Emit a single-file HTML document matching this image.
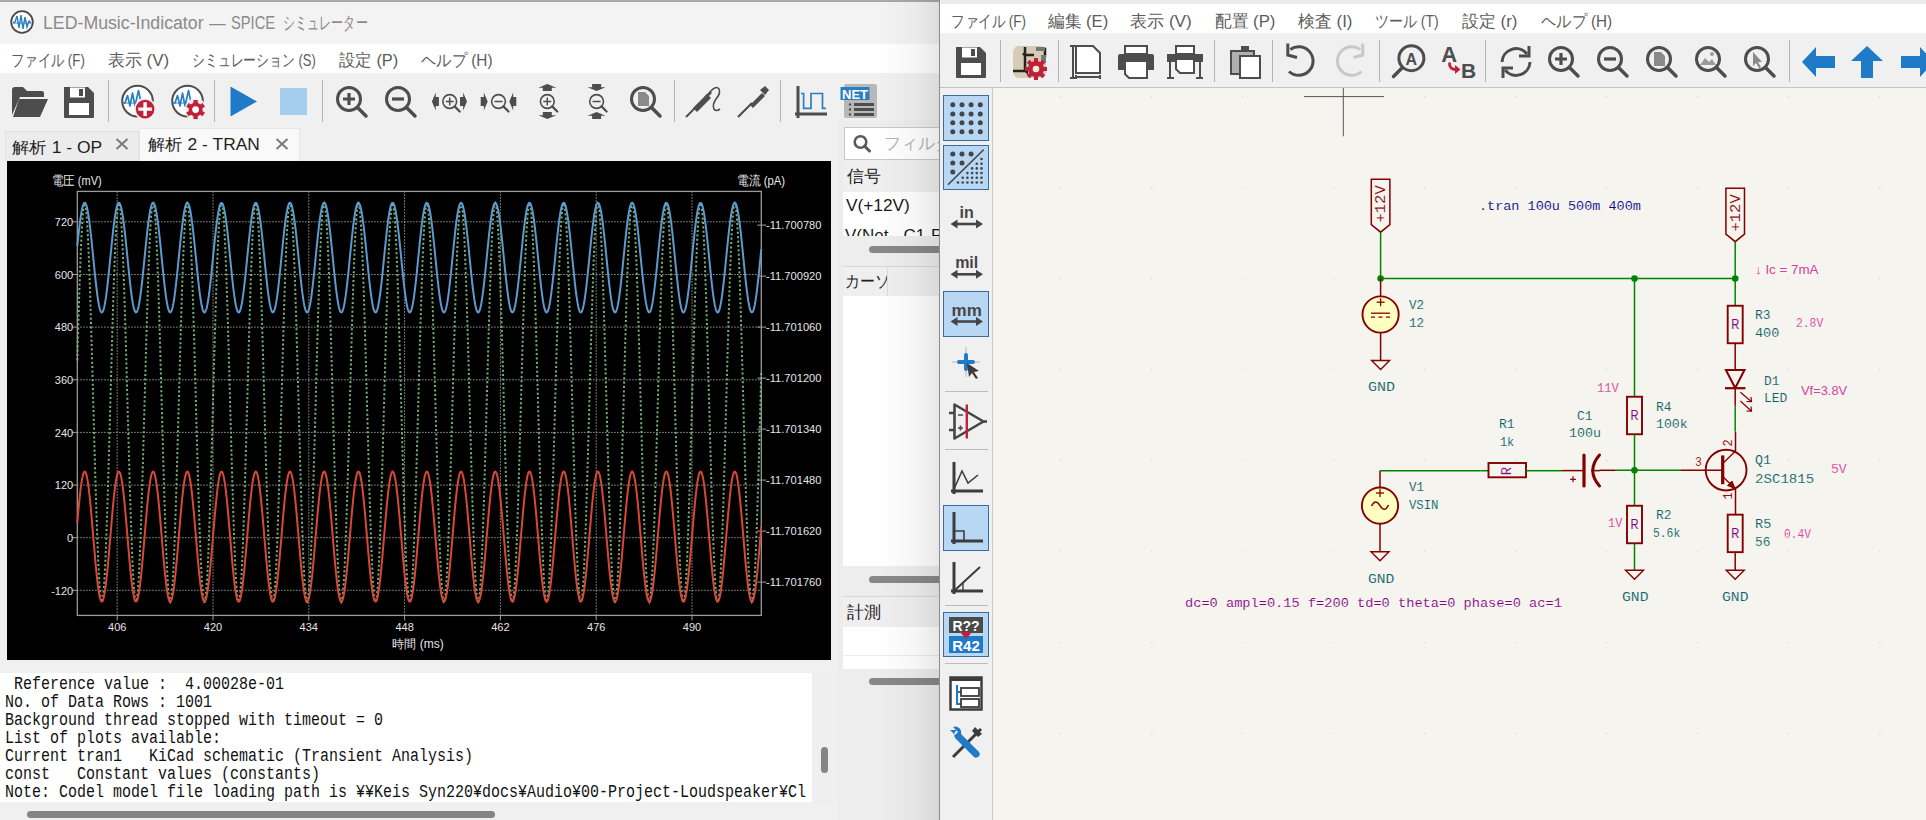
<!DOCTYPE html><html><head><meta charset="utf-8"><title>KiCad</title><style>
*{box-sizing:border-box;margin:0;padding:0}
html,body{width:1926px;height:820px;overflow:hidden;background:#f0f0f0;font-family:"Liberation Sans",sans-serif;position:relative}
.abs{position:absolute}
svg{position:absolute;overflow:visible}
</style></head><body>
<div class="abs" style="left:0px;top:0px;width:940px;height:820px;background:#f0f0f0;"></div>
<div class="abs" style="left:0px;top:0px;width:940px;height:2px;background:#a9a9a9;"></div>
<div class="abs" style="left:0px;top:2px;width:940px;height:42px;background:#f3f3f3;"></div>
<svg style="left:9px;top:9px" width="26" height="26" viewBox="0 0 26 26"><circle cx="13" cy="13" r="10.8" fill="#fff" stroke="#484848" stroke-width="1.8"/><path d="M4 14 L6 13 L8 7 L10 19 L12 6 L14 20 L16 8 L18 18 L20 12 L22 14" fill="none" stroke="#2a7fc0" stroke-width="1.4"/><line x1="4" y1="14" x2="22" y2="14" stroke="#2a7fc0" stroke-width="0.9"/></svg>
<div id="t1" style="position:absolute;top:13.9px;font-size:18px;line-height:18px;color:#8a8a8a;font-family:'Liberation Sans',sans-serif;font-weight:normal;white-space:nowrap;left:42.6px;transform-origin:0 50%;transform:scaleX(0.9847);">LED-Music-Indicator</div>
<div id="t2" style="position:absolute;top:13.9px;font-size:18px;line-height:18px;color:#8a8a8a;font-family:'Liberation Sans',sans-serif;font-weight:normal;white-space:nowrap;left:208.8px;transform-origin:0 50%;transform:scaleX(0.9278);">—</div>
<div id="t3" style="position:absolute;top:13.9px;font-size:18px;line-height:18px;color:#8a8a8a;font-family:'Liberation Sans',sans-serif;font-weight:normal;white-space:nowrap;left:231.3px;transform-origin:0 50%;transform:scaleX(0.8167);">SPICE</div>
<div id="t4" style="position:absolute;top:13.9px;font-size:18px;line-height:18px;color:#8a8a8a;font-family:'Liberation Sans',sans-serif;font-weight:normal;white-space:nowrap;left:282.9px;transform-origin:0 50%;transform:scaleX(0.6722);">シミュレーター</div>
<div class="abs" style="left:0px;top:44px;width:940px;height:29px;background:#ffffff;"></div>
<div id="t5" style="position:absolute;top:52.3px;font-size:17px;line-height:17px;color:#5c5c5c;font-family:'Liberation Sans',sans-serif;font-weight:normal;white-space:nowrap;left:10.6px;transform-origin:0 50%;transform:scaleX(0.7819);">ファイル (F)</div>
<div id="t6" style="position:absolute;top:52.3px;font-size:17px;line-height:17px;color:#5c5c5c;font-family:'Liberation Sans',sans-serif;font-weight:normal;white-space:nowrap;left:107.7px;transform-origin:0 50%;transform:scaleX(0.9967);">表示 (V)</div>
<div id="t7" style="position:absolute;top:52.3px;font-size:17px;line-height:17px;color:#5c5c5c;font-family:'Liberation Sans',sans-serif;font-weight:normal;white-space:nowrap;left:191.9px;transform-origin:0 50%;transform:scaleX(0.7571);">シミュレーション (S)</div>
<div id="t8" style="position:absolute;top:52.3px;font-size:17px;line-height:17px;color:#5c5c5c;font-family:'Liberation Sans',sans-serif;font-weight:normal;white-space:nowrap;left:339.4px;transform-origin:0 50%;transform:scaleX(0.9656);">設定 (P)</div>
<div id="t9" style="position:absolute;top:52.3px;font-size:17px;line-height:17px;color:#5c5c5c;font-family:'Liberation Sans',sans-serif;font-weight:normal;white-space:nowrap;left:421.2px;transform-origin:0 50%;transform:scaleX(0.9013);">ヘルプ (H)</div>
<div class="abs" style="left:0px;top:73px;width:940px;height:55px;background:#f0f0f0;"></div>
<div class="abs" style="left:5px;top:131px;width:134px;height:30px;background:#ececec;border:1px solid #e2e2e2;border-bottom:none"></div>
<div class="abs" style="left:139px;top:128px;width:161px;height:33px;background:#f9f9f9;border:1px solid #e6e6e6;border-bottom:none"></div>
<div id="t10" style="position:absolute;top:139.9px;font-size:16px;line-height:16px;color:#1e1e1e;font-family:'Liberation Sans',sans-serif;font-weight:normal;white-space:nowrap;left:12.0px;transform-origin:0 50%;transform:scaleX(1.0916);">解析 1 - OP</div>
<div id="t11" style="position:absolute;top:136.8px;font-size:16px;line-height:16px;color:#1e1e1e;font-family:'Liberation Sans',sans-serif;font-weight:normal;white-space:nowrap;left:147.5px;transform-origin:0 50%;transform:scaleX(1.0845);">解析 2 - TRAN</div>
<svg style="left:115px;top:138px" width="14" height="12"><path d="M1.5 1 L12.5 11 M12.5 1 L1.5 11" stroke="#7a7a7a" stroke-width="2"/></svg>
<svg style="left:275px;top:138px" width="14" height="12"><path d="M1.5 1 L12.5 11 M12.5 1 L1.5 11" stroke="#7a7a7a" stroke-width="2"/></svg>
<div class="abs" style="left:7px;top:161px;width:824px;height:499px;background:#000000;"></div>
<svg style="left:0;top:0" width="940" height="820" viewBox="0 0 940 820">
<line x1="117.2" y1="191.4" x2="117.2" y2="615.4" stroke="#bdbdbd" stroke-width="1" stroke-dasharray="1.2 1.8"/>
<line x1="117.2" y1="615.4" x2="117.2" y2="620.4" stroke="#a0a0a0" stroke-width="1"/>
<line x1="213.0" y1="191.4" x2="213.0" y2="615.4" stroke="#bdbdbd" stroke-width="1" stroke-dasharray="1.2 1.8"/>
<line x1="213.0" y1="615.4" x2="213.0" y2="620.4" stroke="#a0a0a0" stroke-width="1"/>
<line x1="308.8" y1="191.4" x2="308.8" y2="615.4" stroke="#bdbdbd" stroke-width="1" stroke-dasharray="1.2 1.8"/>
<line x1="308.8" y1="615.4" x2="308.8" y2="620.4" stroke="#a0a0a0" stroke-width="1"/>
<line x1="404.6" y1="191.4" x2="404.6" y2="615.4" stroke="#bdbdbd" stroke-width="1" stroke-dasharray="1.2 1.8"/>
<line x1="404.6" y1="615.4" x2="404.6" y2="620.4" stroke="#a0a0a0" stroke-width="1"/>
<line x1="500.4" y1="191.4" x2="500.4" y2="615.4" stroke="#bdbdbd" stroke-width="1" stroke-dasharray="1.2 1.8"/>
<line x1="500.4" y1="615.4" x2="500.4" y2="620.4" stroke="#a0a0a0" stroke-width="1"/>
<line x1="596.2" y1="191.4" x2="596.2" y2="615.4" stroke="#bdbdbd" stroke-width="1" stroke-dasharray="1.2 1.8"/>
<line x1="596.2" y1="615.4" x2="596.2" y2="620.4" stroke="#a0a0a0" stroke-width="1"/>
<line x1="692.0" y1="191.4" x2="692.0" y2="615.4" stroke="#bdbdbd" stroke-width="1" stroke-dasharray="1.2 1.8"/>
<line x1="692.0" y1="615.4" x2="692.0" y2="620.4" stroke="#a0a0a0" stroke-width="1"/>
<line x1="77.3" y1="221.8" x2="761.3" y2="221.8" stroke="#bdbdbd" stroke-width="1" stroke-dasharray="1.2 1.8"/>
<line x1="72.3" y1="221.8" x2="77.3" y2="221.8" stroke="#a0a0a0" stroke-width="1"/>
<line x1="77.3" y1="274.5" x2="761.3" y2="274.5" stroke="#bdbdbd" stroke-width="1" stroke-dasharray="1.2 1.8"/>
<line x1="72.3" y1="274.5" x2="77.3" y2="274.5" stroke="#a0a0a0" stroke-width="1"/>
<line x1="77.3" y1="327.1" x2="761.3" y2="327.1" stroke="#bdbdbd" stroke-width="1" stroke-dasharray="1.2 1.8"/>
<line x1="72.3" y1="327.1" x2="77.3" y2="327.1" stroke="#a0a0a0" stroke-width="1"/>
<line x1="77.3" y1="379.8" x2="761.3" y2="379.8" stroke="#bdbdbd" stroke-width="1" stroke-dasharray="1.2 1.8"/>
<line x1="72.3" y1="379.8" x2="77.3" y2="379.8" stroke="#a0a0a0" stroke-width="1"/>
<line x1="77.3" y1="432.4" x2="761.3" y2="432.4" stroke="#bdbdbd" stroke-width="1" stroke-dasharray="1.2 1.8"/>
<line x1="72.3" y1="432.4" x2="77.3" y2="432.4" stroke="#a0a0a0" stroke-width="1"/>
<line x1="77.3" y1="485.1" x2="761.3" y2="485.1" stroke="#bdbdbd" stroke-width="1" stroke-dasharray="1.2 1.8"/>
<line x1="72.3" y1="485.1" x2="77.3" y2="485.1" stroke="#a0a0a0" stroke-width="1"/>
<line x1="77.3" y1="537.7" x2="761.3" y2="537.7" stroke="#bdbdbd" stroke-width="1" stroke-dasharray="1.2 1.8"/>
<line x1="72.3" y1="537.7" x2="77.3" y2="537.7" stroke="#a0a0a0" stroke-width="1"/>
<line x1="77.3" y1="590.3" x2="761.3" y2="590.3" stroke="#bdbdbd" stroke-width="1" stroke-dasharray="1.2 1.8"/>
<line x1="72.3" y1="590.3" x2="77.3" y2="590.3" stroke="#a0a0a0" stroke-width="1"/>
<line x1="757.3" y1="225.1" x2="766.3" y2="225.1" stroke="#a0a0a0" stroke-width="1"/>
<line x1="757.3" y1="276.1" x2="766.3" y2="276.1" stroke="#a0a0a0" stroke-width="1"/>
<line x1="757.3" y1="327.1" x2="766.3" y2="327.1" stroke="#a0a0a0" stroke-width="1"/>
<line x1="757.3" y1="378.1" x2="766.3" y2="378.1" stroke="#a0a0a0" stroke-width="1"/>
<line x1="757.3" y1="429.1" x2="766.3" y2="429.1" stroke="#a0a0a0" stroke-width="1"/>
<line x1="757.3" y1="480.1" x2="766.3" y2="480.1" stroke="#a0a0a0" stroke-width="1"/>
<line x1="757.3" y1="531.1" x2="766.3" y2="531.1" stroke="#a0a0a0" stroke-width="1"/>
<line x1="757.3" y1="582.1" x2="766.3" y2="582.1" stroke="#a0a0a0" stroke-width="1"/>
<rect x="77.3" y="191.4" width="684.0" height="424.0" fill="none" stroke="#9a9a9a" stroke-width="1.3"/>
<polyline points="77.3,360.4 77.8,342.7 78.3,325.5 78.8,308.9 79.3,293.2 79.8,278.3 80.3,264.5 80.8,251.9 81.3,240.5 81.8,230.5 82.3,222.0 82.8,214.9 83.3,209.5 83.8,205.7 84.3,203.5 84.8,203.0 85.3,204.2 85.8,207.1 86.3,211.6 86.8,217.7 87.3,225.4 87.8,234.6 88.3,245.2 88.8,257.1 89.3,270.3 89.8,284.5 90.3,299.8 90.8,315.9 91.3,332.7 91.8,350.2 92.3,368.0 92.8,386.2 93.3,404.5 93.8,422.8 94.3,440.9 94.8,458.7 95.3,476.1 95.8,492.8 96.3,508.7 96.8,523.8 97.3,537.8 97.8,550.7 98.3,562.3 98.8,572.6 99.3,581.5 99.8,588.9 100.3,594.7 100.8,598.8 101.3,601.4 101.8,602.2 102.3,601.4 102.8,598.9 103.3,594.7 103.8,588.9 104.3,581.6 104.8,572.7 105.3,562.4 105.8,550.8 106.3,537.9 106.8,523.8 107.3,508.8 107.8,492.9 108.3,476.1 108.8,458.8 109.3,441.0 109.8,422.9 110.3,404.6 110.8,386.3 111.3,368.1 111.8,350.3 112.3,332.8 112.8,316.0 113.3,299.8 113.8,284.6 114.3,270.3 114.8,257.2 115.3,245.2 115.8,234.7 116.3,225.5 116.8,217.8 117.3,211.6 117.8,207.1 118.3,204.2 118.8,203.0 119.3,203.5 119.8,205.7 120.3,209.5 120.8,214.9 121.3,221.9 121.8,230.5 122.3,240.5 122.8,251.8 123.3,264.5 123.8,278.2 124.3,293.1 124.8,308.9 125.3,325.4 125.8,342.6 126.3,360.3 126.8,378.4 127.3,396.6 127.8,415.0 128.3,433.2 128.8,451.1 129.3,468.7 129.8,485.7 130.3,502.0 130.8,517.4 131.3,531.9 131.8,545.3 132.3,557.5 132.8,568.4 133.3,577.9 133.8,585.9 134.3,592.4 134.8,597.2 135.3,600.5 135.8,602.0 136.3,601.9 136.8,600.1 137.3,596.7 137.8,591.6 138.3,584.9 138.8,576.7 139.3,567.0 139.8,555.9 140.3,543.6 140.8,530.0 141.3,515.4 141.8,499.8 142.3,483.4 142.8,466.3 143.3,448.7 143.8,430.7 144.3,412.5 144.8,394.2 145.3,375.9 145.8,357.9 146.3,340.2 146.8,323.1 147.3,306.7 147.8,291.0 148.3,276.3 148.8,262.7 149.3,250.2 149.8,239.0 150.3,229.2 150.8,220.9 151.3,214.1 151.8,208.9 152.3,205.3 152.8,203.4 153.3,203.1 153.8,204.5 154.3,207.6 154.8,212.4 155.3,218.7 155.8,226.6 156.3,236.0 156.8,246.8 157.3,258.9 157.8,272.2 158.3,286.6 158.8,302.0 159.3,318.2 159.8,335.1 160.3,352.6 160.8,370.6 161.3,388.8 161.8,407.1 162.3,425.4 162.8,443.5 163.3,461.2 163.8,478.4 164.3,495.1 164.8,510.9 165.3,525.8 165.8,539.7 166.3,552.4 166.8,563.9 167.3,574.0 167.8,582.6 168.3,589.8 168.8,595.3 169.3,599.3 169.8,601.6 170.3,602.2 170.8,601.1 171.3,598.4 171.8,594.0 172.3,588.0 172.8,580.4 173.3,571.3 173.8,560.8 174.3,549.0 174.8,536.0 175.3,521.8 175.8,506.6 176.3,490.6 176.8,473.8 177.3,456.4 177.8,438.5 178.3,420.4 178.8,402.1 179.3,383.8 179.8,365.6 180.3,347.8 180.8,330.4 181.3,313.7 181.8,297.6 182.3,282.5 182.8,268.4 183.3,255.4 183.8,243.7 184.3,233.3 184.8,224.3 185.3,216.8 185.8,210.9 186.3,206.6 186.8,204.0 187.3,203.0 187.8,203.7 188.3,206.1 188.8,210.1 189.3,215.8 189.8,223.0 190.3,231.8 190.8,242.0 191.3,253.5 191.8,266.3 192.3,280.3 192.8,295.2 193.3,311.1 193.8,327.8 194.3,345.1 194.8,362.8 195.3,380.9 195.8,399.2 196.3,417.5 196.8,435.7 197.3,453.6 197.8,471.1 198.3,488.0 198.8,504.2 199.3,519.5 199.8,533.8 200.3,547.1 200.8,559.1 201.3,569.8 201.8,579.1 202.3,586.9 202.8,593.1 203.3,597.8 203.8,600.8 204.3,602.1 204.8,601.8 205.3,599.8 205.8,596.1 206.3,590.7 206.8,583.8 207.3,575.4 207.8,565.5 208.3,554.3 208.8,541.7 209.3,528.0 209.8,513.3 210.3,497.6 210.8,481.1 211.3,463.9 211.8,446.2 212.3,428.2 212.8,409.9 213.3,391.6 213.8,373.4 214.3,355.4 214.8,337.8 215.3,320.8 215.8,304.4 216.3,288.9 216.8,274.3 217.3,260.9 217.8,248.6 218.3,237.6 218.8,228.0 219.3,219.9 219.8,213.3 220.3,208.3 220.8,204.9 221.3,203.2 221.8,203.2 222.3,204.9 222.8,208.2 223.3,213.2 223.8,219.7 224.3,227.8 224.8,237.4 225.3,248.4 225.8,260.7 226.3,274.1 226.8,288.7 227.3,304.2 227.8,320.5 228.3,337.6 228.8,355.1 229.3,373.1 229.8,391.3 230.3,409.7 230.8,427.9 231.3,446.0 231.8,463.6 232.3,480.8 232.8,497.3 233.3,513.0 233.8,527.8 234.3,541.5 234.8,554.1 235.3,565.4 235.8,575.3 236.3,583.7 236.8,590.7 237.3,596.0 237.8,599.7 238.3,601.8 238.8,602.1 239.3,600.8 239.8,597.9 240.3,593.2 240.8,587.0 241.3,579.2 241.8,570.0 242.3,559.3 242.8,547.3 243.3,534.1 243.8,519.7 244.3,504.4 244.8,488.2 245.3,471.4 245.8,453.9 246.3,436.0 246.8,417.8 247.3,399.5 247.8,381.2 248.3,363.1 248.8,345.3 249.3,328.0 249.8,311.4 250.3,295.5 250.8,280.5 251.3,266.5 251.8,253.7 252.3,242.1 252.8,231.9 253.3,223.2 253.8,215.9 254.3,210.2 254.8,206.2 255.3,203.7 255.8,203.0 256.3,203.9 256.8,206.6 257.3,210.8 257.8,216.7 258.3,224.2 258.8,233.1 259.3,243.5 259.8,255.2 260.3,268.2 260.8,282.3 261.3,297.4 261.8,313.4 262.3,330.2 262.8,347.5 263.3,365.3 263.8,383.5 264.3,401.8 264.8,420.1 265.3,438.2 265.8,456.1 266.3,473.5 266.8,490.3 267.3,506.4 267.8,521.6 268.3,535.8 268.8,548.8 269.3,560.7 269.8,571.2 270.3,580.3 270.8,587.9 271.3,593.9 271.8,598.3 272.3,601.1 272.8,602.2 273.3,601.6 273.8,599.3 274.3,595.4 274.8,589.9 275.3,582.8 275.8,574.1 276.3,564.0 276.8,552.6 277.3,539.9 277.8,526.0 278.3,511.1 278.8,495.3 279.3,478.7 279.8,461.5 280.3,443.7 280.8,425.6 281.3,407.4 281.8,389.0 282.3,370.8 282.8,352.9 283.3,335.4 283.8,318.4 284.3,302.2 284.8,286.8 285.3,272.4 285.8,259.1 286.3,247.0 286.8,236.2 287.3,226.8 287.8,218.8 288.3,212.5 288.8,207.7 289.3,204.6 289.8,203.1 290.3,203.3 290.8,205.2 291.3,208.8 291.8,214.0 292.3,220.8 292.8,229.1 293.3,238.9 293.8,250.0 294.3,262.5 294.8,276.1 295.3,290.8 295.8,306.4 296.3,322.9 296.8,340.0 297.3,357.6 297.8,375.7 298.3,393.9 298.8,412.2 299.3,430.5 299.8,448.5 300.3,466.1 300.8,483.2 301.3,499.6 301.8,515.2 302.3,529.8 302.8,543.4 303.3,555.7 303.8,566.8 304.3,576.5 304.8,584.8 305.3,591.5 305.8,596.6 306.3,600.1 306.8,601.9 307.3,602.1 307.8,600.5 308.3,597.3 308.8,592.5 309.3,586.0 309.8,578.0 310.3,568.5 310.8,557.7 311.3,545.5 311.8,532.1 312.3,517.6 312.8,502.2 313.3,485.9 313.8,468.9 314.3,451.4 314.8,433.4 315.3,415.2 315.8,396.9 316.3,378.6 316.8,360.6 317.3,342.9 317.8,325.7 318.3,309.1 318.8,293.3 319.3,278.5 319.8,264.7 320.3,252.0 320.8,240.6 321.3,230.6 321.8,222.1 322.3,215.0 322.8,209.5 323.3,205.7 323.8,203.5 324.3,203.0 324.8,204.2 325.3,207.1 325.8,211.6 326.3,217.7 326.8,225.3 327.3,234.5 327.8,245.1 328.3,257.0 328.8,270.1 329.3,284.4 329.8,299.6 330.3,315.7 330.8,332.6 331.3,350.0 331.8,367.9 332.3,386.0 332.8,404.3 333.3,422.6 333.8,440.8 334.3,458.6 334.8,475.9 335.3,492.6 335.8,508.6 336.3,523.6 336.8,537.7 337.3,550.6 337.8,562.2 338.3,572.5 338.8,581.4 339.3,588.8 339.8,594.6 340.3,598.8 340.8,601.3 341.3,602.2 341.8,601.4 342.3,598.9 342.8,594.7 343.3,589.0 343.8,581.6 344.3,572.8 344.8,562.5 345.3,550.9 345.8,538.0 346.3,524.0 346.8,509.0 347.3,493.0 347.8,476.3 348.3,459.0 348.8,441.2 349.3,423.1 349.8,404.8 350.3,386.5 350.8,368.3 351.3,350.4 351.8,333.0 352.3,316.1 352.8,300.0 353.3,284.7 353.8,270.5 354.3,257.3 354.8,245.4 355.3,234.8 355.8,225.6 356.3,217.8 356.8,211.7 357.3,207.2 357.8,204.3 358.3,203.0 358.8,203.5 359.3,205.6 359.8,209.4 360.3,214.9 360.8,221.9 361.3,230.4 361.8,240.4 362.3,251.7 362.8,264.3 363.3,278.1 363.8,292.9 364.3,308.7 364.8,325.2 365.3,342.4 365.8,360.1 366.3,378.2 366.8,396.5 367.3,414.8 367.8,433.0 368.3,451.0 368.8,468.5 369.3,485.5 369.8,501.8 370.3,517.3 370.8,531.8 371.3,545.2 371.8,557.4 372.3,568.3 372.8,577.8 373.3,585.8 373.8,592.3 374.3,597.2 374.8,600.5 375.3,602.0 375.8,601.9 376.3,600.2 376.8,596.7 377.3,591.6 377.8,585.0 378.3,576.8 378.8,567.1 379.3,556.0 379.8,543.7 380.3,530.2 380.8,515.5 381.3,500.0 381.8,483.6 382.3,466.5 382.8,448.9 383.3,430.9 383.8,412.7 384.3,394.4 384.8,376.1 385.3,358.1 385.8,340.4 386.3,323.3 386.8,306.8 387.3,291.2 387.8,276.5 388.3,262.8 388.8,250.3 389.3,239.1 389.8,229.3 390.3,221.0 390.8,214.2 391.3,208.9 391.8,205.3 392.3,203.4 392.8,203.1 393.3,204.5 393.8,207.6 394.3,212.3 394.8,218.7 395.3,226.5 395.8,235.9 396.3,246.7 396.8,258.8 397.3,272.0 397.8,286.4 398.3,301.8 398.8,318.0 399.3,335.0 399.8,352.5 400.3,370.4 400.8,388.6 401.3,406.9 401.8,425.2 402.3,443.3 402.8,461.0 403.3,478.3 403.8,494.9 404.3,510.7 404.8,525.7 405.3,539.5 405.8,552.3 406.3,563.8 406.8,573.9 407.3,582.6 407.8,589.7 408.3,595.3 408.8,599.3 409.3,601.6 409.8,602.2 410.3,601.1 410.8,598.4 411.3,594.0 411.8,588.0 412.3,580.5 412.8,571.4 413.3,561.0 413.8,549.2 414.3,536.1 414.8,521.9 415.3,506.8 415.8,490.7 416.3,473.9 416.8,456.5 417.3,438.7 417.8,420.5 418.3,402.2 418.8,383.9 419.3,365.8 419.8,348.0 420.3,330.6 420.8,313.8 421.3,297.8 421.8,282.7 422.3,268.5 422.8,255.6 423.3,243.8 423.8,233.4 424.3,224.4 424.8,216.9 425.3,211.0 425.8,206.7 426.3,204.0 426.8,203.0 427.3,203.7 427.8,206.1 428.3,210.1 428.8,215.7 429.3,223.0 429.8,231.7 430.3,241.9 430.8,253.4 431.3,266.2 431.8,280.1 432.3,295.1 432.8,311.0 433.3,327.6 433.8,344.9 434.3,362.6 434.8,380.7 435.3,399.0 435.8,417.3 436.3,435.5 436.8,453.4 437.3,470.9 437.8,487.8 438.3,504.0 438.8,519.4 439.3,533.7 439.8,547.0 440.3,559.0 440.8,569.7 441.3,579.0 441.8,586.8 442.3,593.1 442.8,597.8 443.3,600.8 443.8,602.1 444.3,601.8 444.8,599.8 445.3,596.1 445.8,590.8 446.3,583.9 446.8,575.5 447.3,565.6 447.8,554.4 448.3,541.9 448.8,528.2 449.3,513.4 449.8,497.7 450.3,481.2 450.8,464.1 451.3,446.4 451.8,428.4 452.3,410.1 452.8,391.8 453.3,373.6 453.8,355.6 454.3,338.0 454.8,320.9 455.3,304.6 455.8,289.1 456.3,274.5 456.8,261.0 457.3,248.7 457.8,237.7 458.3,228.1 458.8,219.9 459.3,213.3 459.8,208.3 460.3,204.9 460.8,203.2 461.3,203.2 461.8,204.8 462.3,208.2 462.8,213.1 463.3,219.7 463.8,227.8 464.3,237.3 464.8,248.3 465.3,260.5 465.8,274.0 466.3,288.5 466.8,304.0 467.3,320.4 467.8,337.4 468.3,355.0 468.8,372.9 469.3,391.2 469.8,409.5 470.3,427.7 470.8,445.8 471.3,463.5 471.8,480.6 472.3,497.2 472.8,512.9 473.3,527.7 473.8,541.4 474.3,554.0 474.8,565.3 475.3,575.2 475.8,583.7 476.3,590.6 476.8,596.0 477.3,599.7 477.8,601.7 478.3,602.1 478.8,600.8 479.3,597.9 479.8,593.3 480.3,587.1 480.8,579.3 481.3,570.1 481.8,559.4 482.3,547.4 482.8,534.2 483.3,519.9 483.8,504.6 484.3,488.4 484.8,471.5 485.3,454.1 485.8,436.2 486.3,418.0 486.8,399.7 487.3,381.4 487.8,363.3 488.3,345.5 488.8,328.2 489.3,311.5 489.8,295.6 490.3,280.6 490.8,266.7 491.3,253.8 491.8,242.3 492.3,232.0 492.8,223.2 493.3,216.0 493.8,210.3 494.3,206.2 494.8,203.8 495.3,203.0 495.8,203.9 496.3,206.5 496.8,210.8 497.3,216.7 497.8,224.1 498.3,233.0 498.8,243.4 499.3,255.1 499.8,268.1 500.3,282.2 500.8,297.3 501.3,313.2 501.8,330.0 502.3,347.3 502.8,365.2 503.3,383.3 503.8,401.6 504.3,419.9 504.8,438.1 505.3,455.9 505.8,473.3 506.3,490.1 506.8,506.2 507.3,521.4 507.8,535.6 508.3,548.7 508.8,560.6 509.3,571.1 509.8,580.2 510.3,587.8 510.8,593.8 511.3,598.3 511.8,601.1 512.3,602.2 512.8,601.6 513.3,599.4 513.8,595.5 514.3,589.9 514.8,582.8 515.3,574.2 515.8,564.1 516.3,552.7 516.8,540.0 517.3,526.2 517.8,511.3 518.3,495.5 518.8,478.9 519.3,461.6 519.8,443.9 520.3,425.8 520.8,407.5 521.3,389.2 521.8,371.0 522.3,353.1 522.8,335.6 523.3,318.6 523.8,302.4 524.3,287.0 524.8,272.5 525.3,259.2 525.8,247.1 526.3,236.3 526.8,226.8 527.3,218.9 527.8,212.5 528.3,207.7 528.8,204.6 529.3,203.1 529.8,203.3 530.3,205.2 530.8,208.8 531.3,213.9 531.8,220.7 532.3,229.0 532.8,238.8 533.3,249.9 533.8,262.4 534.3,276.0 534.8,290.6 535.3,306.3 535.8,322.7 536.3,339.8 536.8,357.5 537.3,375.5 537.8,393.7 538.3,412.0 538.8,430.3 539.3,448.3 539.8,465.9 540.3,483.0 540.8,499.4 541.3,515.0 541.8,529.7 542.3,543.2 542.8,555.6 543.3,566.7 543.8,576.5 544.3,584.7 544.8,591.4 545.3,596.6 545.8,600.1 546.3,601.9 546.8,602.1 547.3,600.5 547.8,597.3 548.3,592.5 548.8,586.1 549.3,578.1 549.8,568.6 550.3,557.8 550.8,545.6 551.3,532.3 551.8,517.8 552.3,502.4 552.8,486.1 553.3,469.1 553.8,451.6 554.3,433.6 554.8,415.4 555.3,397.1 555.8,378.8 556.3,360.8 556.8,343.0 557.3,325.8 557.8,309.3 558.3,293.5 558.8,278.6 559.3,264.8 559.8,252.1 560.3,240.7 560.8,230.7 561.3,222.1 561.8,215.1 562.3,209.6 562.8,205.7 563.3,203.5 563.8,203.0 564.3,204.2 564.8,207.0 565.3,211.5 565.8,217.6 566.3,225.3 566.8,234.4 567.3,245.0 567.8,256.9 568.3,270.0 568.8,284.2 569.3,299.4 569.8,315.5 570.3,332.4 570.8,349.8 571.3,367.7 571.8,385.9 572.3,404.2 572.8,422.5 573.3,440.6 573.8,458.4 574.3,475.7 574.8,492.4 575.3,508.4 575.8,523.5 576.3,537.5 576.8,550.5 577.3,562.1 577.8,572.5 578.3,581.3 578.8,588.7 579.3,594.6 579.8,598.8 580.3,601.3 580.8,602.2 581.3,601.4 581.8,598.9 582.3,594.8 582.8,589.0 583.3,581.7 583.8,572.9 584.3,562.6 584.8,551.0 585.3,538.1 585.8,524.1 586.3,509.1 586.8,493.2 587.3,476.5 587.8,459.2 588.3,441.4 588.8,423.3 589.3,405.0 589.8,386.7 590.3,368.5 590.8,350.6 591.3,333.2 591.8,316.3 592.3,300.2 592.8,284.9 593.3,270.6 593.8,257.4 594.3,245.5 594.8,234.9 595.3,225.6 595.8,217.9 596.3,211.8 596.8,207.2 597.3,204.3 597.8,203.0 598.3,203.5 598.8,205.6 599.3,209.4 599.8,214.8 600.3,221.8 600.8,230.3 601.3,240.3 601.8,251.6 602.3,264.2 602.8,278.0 603.3,292.8 603.8,308.5 604.3,325.1 604.8,342.3 605.3,360.0 605.8,378.0 606.3,396.3 606.8,414.6 607.3,432.8 607.8,450.8 608.3,468.3 608.8,485.3 609.3,501.6 609.8,517.1 610.3,531.6 610.8,545.0 611.3,557.3 611.8,568.2 612.3,577.7 612.8,585.8 613.3,592.3 613.8,597.2 614.3,600.4 614.8,602.0 615.3,601.9 615.8,600.2 616.3,596.8 616.8,591.7 617.3,585.1 617.8,576.9 618.3,567.2 618.8,556.2 619.3,543.8 619.8,530.3 620.3,515.7 620.8,500.1 621.3,483.8 621.8,466.7 622.3,449.1 622.8,431.1 623.3,412.9 623.8,394.5 624.3,376.3 624.8,358.3 625.3,340.6 625.8,323.5 626.3,307.0 626.8,291.3 627.3,276.6 627.8,262.9 628.3,250.5 628.8,239.3 629.3,229.4 629.8,221.1 630.3,214.2 630.8,209.0 631.3,205.3 631.8,203.4 632.3,203.1 632.8,204.5 633.3,207.6 633.8,212.3 634.3,218.6 634.8,226.5 635.3,235.8 635.8,246.6 636.3,258.6 636.8,271.9 637.3,286.3 637.8,301.7 638.3,317.9 638.8,334.8 639.3,352.3 639.8,370.2 640.3,388.4 640.8,406.7 641.3,425.0 641.8,443.1 642.3,460.8 642.8,478.1 643.3,494.7 643.8,510.6 644.3,525.5 644.8,539.4 645.3,552.2 645.8,563.7 646.3,573.8 646.8,582.5 647.3,589.7 647.8,595.2 648.3,599.2 648.8,601.5 649.3,602.2 649.8,601.2 650.3,598.4 650.8,594.1 651.3,588.1 651.8,580.6 652.3,571.5 652.8,561.1 653.3,549.3 653.8,536.2 654.3,522.1 654.8,506.9 655.3,490.9 655.8,474.1 656.3,456.7 656.8,438.9 657.3,420.7 657.8,402.4 658.3,384.1 658.8,366.0 659.3,348.1 659.8,330.8 660.3,314.0 660.8,298.0 661.3,282.8 661.8,268.7 662.3,255.7 662.8,243.9 663.3,233.5 663.8,224.5 664.3,217.0 664.8,211.0 665.3,206.7 665.8,204.0 666.3,203.0 666.8,203.7 667.3,206.0 667.8,210.0 668.3,215.7 668.8,222.9 669.3,231.6 669.8,241.8 670.3,253.3 670.8,266.1 671.3,280.0 671.8,294.9 672.3,310.8 672.8,327.4 673.3,344.7 673.8,362.5 674.3,380.6 674.8,398.8 675.3,417.2 675.8,435.3 676.3,453.3 676.8,470.8 677.3,487.7 677.8,503.9 678.3,519.2 678.8,533.6 679.3,546.8 679.8,558.9 680.3,569.6 680.8,578.9 681.3,586.8 681.8,593.0 682.3,597.7 682.8,600.8 683.3,602.1 683.8,601.8 684.3,599.8 684.8,596.2 685.3,590.9 685.8,584.0 686.3,575.6 686.8,565.7 687.3,554.5 687.8,542.0 688.3,528.3 688.8,513.6 689.3,497.9 689.8,481.4 690.3,464.3 690.8,446.6 691.3,428.6 691.8,410.3 692.3,392.0 692.8,373.7 693.3,355.8 693.8,338.2 694.3,321.1 694.8,304.8 695.3,289.2 695.8,274.6 696.3,261.1 696.8,248.8 697.3,237.8 697.8,228.2 698.3,220.0 698.8,213.4 699.3,208.4 699.8,205.0 700.3,203.2 700.8,203.2 701.3,204.8 701.8,208.1 702.3,213.1 702.8,219.6 703.3,227.7 703.8,237.2 704.3,248.2 704.8,260.4 705.3,273.9 705.8,288.4 706.3,303.9 706.8,320.2 707.3,337.2 707.8,354.8 708.3,372.7 708.8,391.0 709.3,409.3 709.8,427.6 710.3,445.6 710.8,463.3 711.3,480.5 711.8,497.0 712.3,512.7 712.8,527.5 713.3,541.3 713.8,553.9 714.3,565.2 714.8,575.1 715.3,583.6 715.8,590.5 716.3,595.9 716.8,599.7 717.3,601.7 717.8,602.1 718.3,600.9 718.8,597.9 719.3,593.3 719.8,587.1 720.3,579.4 720.8,570.2 721.3,559.5 721.8,547.5 722.3,534.3 722.8,520.0 723.3,504.7 723.8,488.6 724.3,471.7 724.8,454.2 725.3,436.3 725.8,418.2 726.3,399.9 726.8,381.6 727.3,363.5 727.8,345.7 728.3,328.4 728.8,311.7 729.3,295.8 729.8,280.8 730.3,266.8 730.8,253.9 731.3,242.4 731.8,232.1 732.3,223.3 732.8,216.0 733.3,210.3 733.8,206.2 734.3,203.8 734.8,203.0 735.3,203.9 735.8,206.5 736.3,210.7 736.8,216.6 737.3,224.0 737.8,232.9 738.3,243.3 738.8,255.0 739.3,267.9 739.8,282.0 740.3,297.1 740.8,313.1 741.3,329.8 741.8,347.2 742.3,365.0 742.8,383.1 743.3,401.4 743.8,419.7 744.3,437.9 744.8,455.7 745.3,473.2 745.8,490.0 746.3,506.1 746.8,521.3 747.3,535.5 747.8,548.6 748.3,560.5 748.8,571.0 749.3,580.1 749.8,587.7 750.3,593.8 750.8,598.2 751.3,601.0 751.8,602.2 752.3,601.6 752.8,599.4 753.3,595.5 753.8,590.0 754.3,582.9 754.8,574.3 755.3,564.2 755.8,552.8 756.3,540.1 756.8,526.3 757.3,511.4 757.8,495.6 758.3,479.0 758.8,461.8 759.3,444.1 759.8,426.0 760.3,407.7 760.8,389.4 761.3,371.2" fill="none" stroke="#7ab27a" stroke-width="2" stroke-dasharray="2 2.4"/>
<polyline points="77.3,246.0 77.8,241.2 78.3,236.4 78.8,231.9 79.3,227.6 79.8,223.5 80.3,219.7 80.8,216.2 81.3,213.1 81.8,210.4 82.3,208.0 82.8,206.1 83.3,204.6 83.8,203.5 84.3,202.9 84.8,202.8 85.3,203.1 85.8,203.9 86.3,205.2 86.8,206.8 87.3,209.0 87.8,211.5 88.3,214.4 88.8,217.7 89.3,221.3 89.8,225.2 90.3,229.4 90.8,233.8 91.3,238.4 91.8,243.2 92.3,248.1 92.8,253.1 93.3,258.1 93.8,263.2 94.3,268.1 94.8,273.0 95.3,277.8 95.8,282.4 96.3,286.7 96.8,290.9 97.3,294.7 97.8,298.3 98.3,301.5 98.8,304.3 99.3,306.7 99.8,308.7 100.3,310.3 100.8,311.5 101.3,312.2 101.8,312.4 102.3,312.2 102.8,311.5 103.3,310.3 103.8,308.7 104.3,306.7 104.8,304.3 105.3,301.5 105.8,298.3 106.3,294.7 106.8,290.9 107.3,286.8 107.8,282.4 108.3,277.8 108.8,273.0 109.3,268.2 109.8,263.2 110.3,258.2 110.8,253.1 111.3,248.1 111.8,243.2 112.3,238.4 112.8,233.8 113.3,229.4 113.8,225.2 114.3,221.3 114.8,217.7 115.3,214.4 115.8,211.5 116.3,209.0 116.8,206.9 117.3,205.2 117.8,203.9 118.3,203.1 118.8,202.8 119.3,202.9 119.8,203.5 120.3,204.6 120.8,206.1 121.3,208.0 121.8,210.3 122.3,213.1 122.8,216.2 123.3,219.7 123.8,223.5 124.3,227.5 124.8,231.9 125.3,236.4 125.8,241.1 126.3,246.0 126.8,250.9 127.3,256.0 127.8,261.0 128.3,266.0 128.8,270.9 129.3,275.7 129.8,280.4 130.3,284.9 130.8,289.1 131.3,293.1 131.8,296.8 132.3,300.1 132.8,303.1 133.3,305.7 133.8,307.9 134.3,309.7 134.8,311.0 135.3,311.9 135.8,312.4 136.3,312.3 136.8,311.8 137.3,310.9 137.8,309.5 138.3,307.7 138.8,305.4 139.3,302.7 139.8,299.7 140.3,296.3 140.8,292.6 141.3,288.6 141.8,284.3 142.3,279.8 142.8,275.1 143.3,270.3 143.8,265.3 144.3,260.3 144.8,255.3 145.3,250.3 145.8,245.3 146.3,240.5 146.8,235.8 147.3,231.3 147.8,227.0 148.3,222.9 148.8,219.2 149.3,215.8 149.8,212.7 150.3,210.0 150.8,207.7 151.3,205.8 151.8,204.4 152.3,203.4 152.8,202.9 153.3,202.8 153.8,203.2 154.3,204.1 154.8,205.4 155.3,207.1 155.8,209.3 156.3,211.9 156.8,214.8 157.3,218.1 157.8,221.8 158.3,225.7 158.8,230.0 159.3,234.4 159.8,239.1 160.3,243.9 160.8,248.8 161.3,253.8 161.8,258.8 162.3,263.9 162.8,268.8 163.3,273.7 163.8,278.4 164.3,283.0 164.8,287.3 165.3,291.4 165.8,295.2 166.3,298.7 166.8,301.9 167.3,304.7 167.8,307.0 168.3,309.0 168.8,310.5 169.3,311.6 169.8,312.2 170.3,312.4 170.8,312.1 171.3,311.3 171.8,310.1 172.3,308.5 172.8,306.4 173.3,303.9 173.8,301.0 174.3,297.8 174.8,294.2 175.3,290.3 175.8,286.2 176.3,281.7 176.8,277.1 177.3,272.4 177.8,267.5 178.3,262.5 178.8,257.4 179.3,252.4 179.8,247.4 180.3,242.5 180.8,237.8 181.3,233.2 181.8,228.8 182.3,224.6 182.8,220.8 183.3,217.2 183.8,214.0 184.3,211.1 184.8,208.6 185.3,206.6 185.8,205.0 186.3,203.8 186.8,203.1 187.3,202.8 187.8,203.0 188.3,203.7 188.8,204.8 189.3,206.3 189.8,208.3 190.3,210.7 190.8,213.5 191.3,216.7 191.8,220.2 192.3,224.0 192.8,228.1 193.3,232.5 193.8,237.1 194.3,241.8 194.8,246.7 195.3,251.6 195.8,256.7 196.3,261.7 196.8,266.7 197.3,271.6 197.8,276.4 198.3,281.0 198.8,285.5 199.3,289.7 199.8,293.6 200.3,297.3 200.8,300.6 201.3,303.5 201.8,306.1 202.3,308.2 202.8,309.9 203.3,311.2 203.8,312.0 204.3,312.4 204.8,312.3 205.3,311.7 205.8,310.7 206.3,309.3 206.8,307.4 207.3,305.0 207.8,302.3 208.3,299.2 208.8,295.8 209.3,292.0 209.8,288.0 210.3,283.7 210.8,279.1 211.3,274.4 211.8,269.6 212.3,264.6 212.8,259.6 213.3,254.6 213.8,249.6 214.3,244.6 214.8,239.8 215.3,235.1 215.8,230.6 216.3,226.4 216.8,222.4 217.3,218.7 217.8,215.3 218.3,212.3 218.8,209.7 219.3,207.4 219.8,205.6 220.3,204.2 220.8,203.3 221.3,202.9 221.8,202.9 222.3,203.3 222.8,204.2 223.3,205.6 223.8,207.4 224.3,209.6 224.8,212.3 225.3,215.3 225.8,218.6 226.3,222.3 226.8,226.3 227.3,230.6 227.8,235.1 228.3,239.7 228.8,244.6 229.3,249.5 229.8,254.5 230.3,259.5 230.8,264.6 231.3,269.5 231.8,274.4 232.3,279.1 232.8,283.6 233.3,287.9 233.8,292.0 234.3,295.7 234.8,299.2 235.3,302.3 235.8,305.0 236.3,307.3 236.8,309.2 237.3,310.7 237.8,311.7 238.3,312.3 238.8,312.4 239.3,312.0 239.8,311.2 240.3,309.9 240.8,308.2 241.3,306.1 241.8,303.5 242.3,300.6 242.8,297.3 243.3,293.7 243.8,289.8 244.3,285.6 244.8,281.1 245.3,276.5 245.8,271.7 246.3,266.8 246.8,261.8 247.3,256.7 247.8,251.7 248.3,246.8 248.8,241.9 249.3,237.1 249.8,232.6 250.3,228.2 250.8,224.1 251.3,220.2 251.8,216.7 252.3,213.5 252.8,210.7 253.3,208.3 253.8,206.3 254.3,204.8 254.8,203.7 255.3,203.0 255.8,202.8 256.3,203.1 256.8,203.8 257.3,205.0 257.8,206.6 258.3,208.6 258.8,211.1 259.3,213.9 259.8,217.1 260.3,220.7 260.8,224.6 261.3,228.7 261.8,233.1 262.3,237.7 262.8,242.5 263.3,247.4 263.8,252.3 264.3,257.4 264.8,262.4 265.3,267.4 265.8,272.3 266.3,277.1 266.8,281.7 267.3,286.1 267.8,290.3 268.3,294.2 268.8,297.8 269.3,301.0 269.8,303.9 270.3,306.4 270.8,308.5 271.3,310.1 271.8,311.3 272.3,312.1 272.8,312.4 273.3,312.2 273.8,311.6 274.3,310.5 274.8,309.0 275.3,307.1 275.8,304.7 276.3,301.9 276.8,298.8 277.3,295.3 277.8,291.5 278.3,287.4 278.8,283.0 279.3,278.5 279.8,273.8 280.3,268.9 280.8,263.9 281.3,258.9 281.8,253.9 282.3,248.9 282.8,244.0 283.3,239.1 283.8,234.5 284.3,230.0 284.8,225.8 285.3,221.9 285.8,218.2 286.3,214.9 286.8,211.9 287.3,209.3 287.8,207.1 288.3,205.4 288.8,204.1 289.3,203.2 289.8,202.8 290.3,202.9 290.8,203.4 291.3,204.4 291.8,205.8 292.3,207.7 292.8,210.0 293.3,212.7 293.8,215.7 294.3,219.1 294.8,222.9 295.3,226.9 295.8,231.2 296.3,235.7 296.8,240.4 297.3,245.3 297.8,250.2 298.3,255.2 298.8,260.2 299.3,265.2 299.8,270.2 300.3,275.0 300.8,279.7 301.3,284.2 301.8,288.5 302.3,292.5 302.8,296.2 303.3,299.6 303.8,302.7 304.3,305.4 304.8,307.6 305.3,309.5 305.8,310.9 306.3,311.8 306.8,312.3 307.3,312.4 307.8,311.9 308.3,311.1 308.8,309.7 309.3,308.0 309.8,305.8 310.3,303.2 310.8,300.2 311.3,296.8 311.8,293.2 312.3,289.2 312.8,284.9 313.3,280.5 313.8,275.8 314.3,271.0 314.8,266.1 315.3,261.1 315.8,256.0 316.3,251.0 316.8,246.1 317.3,241.2 317.8,236.5 318.3,231.9 318.8,227.6 319.3,223.5 319.8,219.7 320.3,216.3 320.8,213.1 321.3,210.4 321.8,208.0 322.3,206.1 322.8,204.6 323.3,203.5 323.8,202.9 324.3,202.8 324.8,203.1 325.3,203.9 325.8,205.2 326.3,206.8 326.8,208.9 327.3,211.4 327.8,214.4 328.3,217.6 328.8,221.2 329.3,225.1 329.8,229.3 330.3,233.7 330.8,238.4 331.3,243.2 331.8,248.1 332.3,253.1 332.8,258.1 333.3,263.1 333.8,268.1 334.3,273.0 334.8,277.7 335.3,282.3 335.8,286.7 336.3,290.8 336.8,294.7 337.3,298.2 337.8,301.4 338.3,304.3 338.8,306.7 339.3,308.7 339.8,310.3 340.3,311.5 340.8,312.2 341.3,312.4 341.8,312.2 342.3,311.5 342.8,310.4 343.3,308.8 343.8,306.8 344.3,304.3 344.8,301.5 345.3,298.3 345.8,294.8 346.3,290.9 346.8,286.8 347.3,282.4 347.8,277.8 348.3,273.1 348.8,268.2 349.3,263.2 349.8,258.2 350.3,253.2 350.8,248.2 351.3,243.3 351.8,238.5 352.3,233.9 352.8,229.4 353.3,225.2 353.8,221.3 354.3,217.7 354.8,214.4 355.3,211.5 355.8,209.0 356.3,206.9 356.8,205.2 357.3,203.9 357.8,203.1 358.3,202.8 358.8,202.9 359.3,203.5 359.8,204.6 360.3,206.1 360.8,208.0 361.3,210.3 361.8,213.1 362.3,216.2 362.8,219.6 363.3,223.4 363.8,227.5 364.3,231.8 364.8,236.4 365.3,241.1 365.8,245.9 366.3,250.9 366.8,255.9 367.3,260.9 367.8,265.9 368.3,270.9 368.8,275.7 369.3,280.4 369.8,284.8 370.3,289.1 370.8,293.1 371.3,296.7 371.8,300.1 372.3,303.1 372.8,305.7 373.3,307.9 373.8,309.7 374.3,311.0 374.8,311.9 375.3,312.4 375.8,312.3 376.3,311.8 376.8,310.9 377.3,309.5 377.8,307.7 378.3,305.4 378.8,302.8 379.3,299.7 379.8,296.3 380.3,292.6 380.8,288.6 381.3,284.3 381.8,279.8 382.3,275.1 382.8,270.3 383.3,265.4 383.8,260.4 384.3,255.3 384.8,250.3 385.3,245.4 385.8,240.5 386.3,235.8 386.8,231.3 387.3,227.0 387.8,223.0 388.3,219.2 388.8,215.8 389.3,212.7 389.8,210.0 390.3,207.7 390.8,205.9 391.3,204.4 391.8,203.4 392.3,202.9 392.8,202.8 393.3,203.2 393.8,204.1 394.3,205.4 394.8,207.1 395.3,209.3 395.8,211.8 396.3,214.8 396.8,218.1 397.3,221.8 397.8,225.7 398.3,229.9 398.8,234.4 399.3,239.0 399.8,243.8 400.3,248.8 400.8,253.8 401.3,258.8 401.8,263.8 402.3,268.8 402.8,273.6 403.3,278.4 403.8,282.9 404.3,287.3 404.8,291.4 405.3,295.2 405.8,298.7 406.3,301.8 406.8,304.6 407.3,307.0 407.8,309.0 408.3,310.5 408.8,311.6 409.3,312.2 409.8,312.4 410.3,312.1 410.8,311.4 411.3,310.2 411.8,308.5 412.3,306.4 412.8,304.0 413.3,301.1 413.8,297.8 414.3,294.3 414.8,290.4 415.3,286.2 415.8,281.8 416.3,277.2 416.8,272.4 417.3,267.5 417.8,262.5 418.3,257.5 418.8,252.5 419.3,247.5 419.8,242.6 420.3,237.8 420.8,233.2 421.3,228.8 421.8,224.7 422.3,220.8 422.8,217.2 423.3,214.0 423.8,211.1 424.3,208.7 424.8,206.6 425.3,205.0 425.8,203.8 426.3,203.1 426.8,202.8 427.3,203.0 427.8,203.6 428.3,204.7 428.8,206.3 429.3,208.3 429.8,210.7 430.3,213.5 430.8,216.6 431.3,220.1 431.8,224.0 432.3,228.1 432.8,232.4 433.3,237.0 433.8,241.8 434.3,246.6 434.8,251.6 435.3,256.6 435.8,261.6 436.3,266.6 436.8,271.6 437.3,276.4 437.8,281.0 438.3,285.4 438.8,289.7 439.3,293.6 439.8,297.2 440.3,300.5 440.8,303.5 441.3,306.0 441.8,308.2 442.3,309.9 442.8,311.2 443.3,312.0 443.8,312.4 444.3,312.3 444.8,311.7 445.3,310.7 445.8,309.3 446.3,307.4 446.8,305.1 447.3,302.4 447.8,299.3 448.3,295.8 448.8,292.1 449.3,288.0 449.8,283.7 450.3,279.2 450.8,274.5 451.3,269.6 451.8,264.7 452.3,259.7 452.8,254.6 453.3,249.6 453.8,244.7 454.3,239.9 454.8,235.2 455.3,230.7 455.8,226.4 456.3,222.4 456.8,218.7 457.3,215.3 457.8,212.3 458.3,209.7 458.8,207.4 459.3,205.6 459.8,204.3 460.3,203.3 460.8,202.9 461.3,202.9 461.8,203.3 462.3,204.2 462.8,205.6 463.3,207.4 463.8,209.6 464.3,212.2 464.8,215.2 465.3,218.6 465.8,222.3 466.3,226.3 466.8,230.5 467.3,235.0 467.8,239.7 468.3,244.5 468.8,249.5 469.3,254.5 469.8,259.5 470.3,264.5 470.8,269.5 471.3,274.3 471.8,279.0 472.3,283.6 472.8,287.9 473.3,291.9 473.8,295.7 474.3,299.2 474.8,302.3 475.3,305.0 475.8,307.3 476.3,309.2 476.8,310.7 477.3,311.7 477.8,312.3 478.3,312.4 478.8,312.0 479.3,311.2 479.8,310.0 480.3,308.2 480.8,306.1 481.3,303.6 481.8,300.6 482.3,297.4 482.8,293.7 483.3,289.8 483.8,285.6 484.3,281.2 484.8,276.5 485.3,271.7 485.8,266.8 486.3,261.8 486.8,256.8 487.3,251.8 487.8,246.8 488.3,241.9 488.8,237.2 489.3,232.6 489.8,228.2 490.3,224.1 490.8,220.3 491.3,216.8 491.8,213.6 492.3,210.8 492.8,208.4 493.3,206.4 493.8,204.8 494.3,203.7 494.8,203.0 495.3,202.8 495.8,203.1 496.3,203.8 496.8,204.9 497.3,206.6 497.8,208.6 498.3,211.0 498.8,213.9 499.3,217.1 499.8,220.7 500.3,224.5 500.8,228.7 501.3,233.1 501.8,237.7 502.3,242.4 502.8,247.3 503.3,252.3 503.8,257.3 504.3,262.3 504.8,267.3 505.3,272.2 505.8,277.0 506.3,281.6 506.8,286.0 507.3,290.2 507.8,294.1 508.3,297.7 508.8,301.0 509.3,303.9 509.8,306.4 510.3,308.4 510.8,310.1 511.3,311.3 511.8,312.1 512.3,312.4 512.8,312.2 513.3,311.6 513.8,310.6 514.3,309.0 514.8,307.1 515.3,304.7 515.8,302.0 516.3,298.8 516.8,295.3 517.3,291.5 517.8,287.4 518.3,283.1 518.8,278.5 519.3,273.8 519.8,268.9 520.3,264.0 520.8,259.0 521.3,253.9 521.8,248.9 522.3,244.0 522.8,239.2 523.3,234.5 523.8,230.1 524.3,225.9 524.8,221.9 525.3,218.2 525.8,214.9 526.3,211.9 526.8,209.3 527.3,207.2 527.8,205.4 528.3,204.1 528.8,203.2 529.3,202.8 529.8,202.9 530.3,203.4 530.8,204.4 531.3,205.8 531.8,207.7 532.3,209.9 532.8,212.6 533.3,215.7 533.8,219.1 534.3,222.8 534.8,226.9 535.3,231.2 535.8,235.7 536.3,240.4 536.8,245.2 537.3,250.2 537.8,255.2 538.3,260.2 538.8,265.2 539.3,270.1 539.8,275.0 540.3,279.7 540.8,284.2 541.3,288.5 541.8,292.5 542.3,296.2 542.8,299.6 543.3,302.7 543.8,305.3 544.3,307.6 544.8,309.4 545.3,310.9 545.8,311.8 546.3,312.3 546.8,312.4 547.3,311.9 547.8,311.1 548.3,309.7 548.8,308.0 549.3,305.8 549.8,303.2 550.3,300.2 550.8,296.9 551.3,293.2 551.8,289.2 552.3,285.0 552.8,280.5 553.3,275.9 553.8,271.0 554.3,266.1 554.8,261.1 555.3,256.1 555.8,251.1 556.3,246.1 556.8,241.2 557.3,236.5 557.8,232.0 558.3,227.6 558.8,223.6 559.3,219.8 559.8,216.3 560.3,213.2 560.8,210.4 561.3,208.1 561.8,206.1 562.3,204.6 562.8,203.6 563.3,203.0 563.8,202.8 564.3,203.1 564.8,203.9 565.3,205.1 565.8,206.8 566.3,208.9 566.8,211.4 567.3,214.3 567.8,217.6 568.3,221.2 568.8,225.1 569.3,229.3 569.8,233.7 570.3,238.3 570.8,243.1 571.3,248.0 571.8,253.0 572.3,258.0 572.8,263.1 573.3,268.0 573.8,272.9 574.3,277.7 574.8,282.3 575.3,286.6 575.8,290.8 576.3,294.6 576.8,298.2 577.3,301.4 577.8,304.2 578.3,306.7 578.8,308.7 579.3,310.3 579.8,311.5 580.3,312.2 580.8,312.4 581.3,312.2 581.8,311.5 582.3,310.4 582.8,308.8 583.3,306.8 583.8,304.4 584.3,301.5 584.8,298.3 585.3,294.8 585.8,291.0 586.3,286.8 586.8,282.5 587.3,277.9 587.8,273.1 588.3,268.2 588.8,263.3 589.3,258.3 589.8,253.2 590.3,248.2 590.8,243.3 591.3,238.5 591.8,233.9 592.3,229.5 592.8,225.3 593.3,221.4 593.8,217.7 594.3,214.5 594.8,211.5 595.3,209.0 595.8,206.9 596.3,205.2 596.8,204.0 597.3,203.2 597.8,202.8 598.3,202.9 598.8,203.5 599.3,204.6 599.8,206.0 600.3,208.0 600.8,210.3 601.3,213.0 601.8,216.1 602.3,219.6 602.8,223.4 603.3,227.4 603.8,231.8 604.3,236.3 604.8,241.0 605.3,245.9 605.8,250.8 606.3,255.9 606.8,260.9 607.3,265.9 607.8,270.8 608.3,275.6 608.8,280.3 609.3,284.8 609.8,289.0 610.3,293.0 610.8,296.7 611.3,300.1 611.8,303.1 612.3,305.7 612.8,307.9 613.3,309.7 613.8,311.0 614.3,311.9 614.8,312.4 615.3,312.3 615.8,311.8 616.3,310.9 616.8,309.5 617.3,307.7 617.8,305.4 618.3,302.8 618.8,299.8 619.3,296.4 619.8,292.7 620.3,288.6 620.8,284.4 621.3,279.9 621.8,275.2 622.3,270.4 622.8,265.4 623.3,260.4 623.8,255.4 624.3,250.4 624.8,245.4 625.3,240.6 625.8,235.9 626.3,231.4 626.8,227.1 627.3,223.0 627.8,219.3 628.3,215.8 628.8,212.8 629.3,210.1 629.8,207.8 630.3,205.9 630.8,204.4 631.3,203.4 631.8,202.9 632.3,202.8 632.8,203.2 633.3,204.1 633.8,205.3 634.3,207.1 634.8,209.2 635.3,211.8 635.8,214.8 636.3,218.1 636.8,221.7 637.3,225.7 637.8,229.9 638.3,234.3 638.8,239.0 639.3,243.8 639.8,248.7 640.3,253.7 640.8,258.7 641.3,263.8 641.8,268.7 642.3,273.6 642.8,278.3 643.3,282.9 643.8,287.2 644.3,291.3 644.8,295.2 645.3,298.7 645.8,301.8 646.3,304.6 646.8,307.0 647.3,309.0 647.8,310.5 648.3,311.6 648.8,312.2 649.3,312.4 649.8,312.1 650.3,311.4 650.8,310.2 651.3,308.5 651.8,306.5 652.3,304.0 652.8,301.1 653.3,297.9 653.8,294.3 654.3,290.4 654.8,286.2 655.3,281.8 655.8,277.2 656.3,272.5 656.8,267.6 657.3,262.6 657.8,257.5 658.3,252.5 658.8,247.5 659.3,242.6 659.8,237.9 660.3,233.3 660.8,228.9 661.3,224.7 661.8,220.8 662.3,217.3 662.8,214.0 663.3,211.2 663.8,208.7 664.3,206.6 664.8,205.0 665.3,203.8 665.8,203.1 666.3,202.8 666.8,203.0 667.3,203.6 667.8,204.7 668.3,206.3 668.8,208.3 669.3,210.7 669.8,213.4 670.3,216.6 670.8,220.1 671.3,223.9 671.8,228.0 672.3,232.4 672.8,237.0 673.3,241.7 673.8,246.6 674.3,251.5 674.8,256.6 675.3,261.6 675.8,266.6 676.3,271.5 676.8,276.3 677.3,281.0 677.8,285.4 678.3,289.6 678.8,293.6 679.3,297.2 679.8,300.5 680.3,303.4 680.8,306.0 681.3,308.2 681.8,309.9 682.3,311.2 682.8,312.0 683.3,312.4 683.8,312.3 684.3,311.7 684.8,310.7 685.3,309.3 685.8,307.4 686.3,305.1 686.8,302.4 687.3,299.3 687.8,295.9 688.3,292.1 688.8,288.1 689.3,283.8 689.8,279.2 690.3,274.5 690.8,269.7 691.3,264.7 691.8,259.7 692.3,254.7 692.8,249.7 693.3,244.7 693.8,239.9 694.3,235.2 694.8,230.7 695.3,226.5 695.8,222.5 696.3,218.8 696.8,215.4 697.3,212.4 697.8,209.7 698.3,207.5 698.8,205.6 699.3,204.3 699.8,203.3 700.3,202.9 700.8,202.9 701.3,203.3 701.8,204.2 702.3,205.6 702.8,207.4 703.3,209.6 703.8,212.2 704.3,215.2 704.8,218.6 705.3,222.3 705.8,226.2 706.3,230.5 706.8,235.0 707.3,239.6 707.8,244.5 708.3,249.4 708.8,254.4 709.3,259.4 709.8,264.5 710.3,269.4 710.8,274.3 711.3,279.0 711.8,283.5 712.3,287.8 712.8,291.9 713.3,295.7 713.8,299.1 714.3,302.2 714.8,305.0 715.3,307.3 715.8,309.2 716.3,310.7 716.8,311.7 717.3,312.3 717.8,312.4 718.3,312.0 718.8,311.2 719.3,310.0 719.8,308.3 720.3,306.1 720.8,303.6 721.3,300.7 721.8,297.4 722.3,293.8 722.8,289.8 723.3,285.6 723.8,281.2 724.3,276.6 724.8,271.8 725.3,266.9 725.8,261.9 726.3,256.8 726.8,251.8 727.3,246.9 727.8,242.0 728.3,237.2 728.8,232.6 729.3,228.3 729.8,224.2 730.3,220.3 730.8,216.8 731.3,213.6 731.8,210.8 732.3,208.4 732.8,206.4 733.3,204.8 733.8,203.7 734.3,203.0 734.8,202.8 735.3,203.1 735.8,203.8 736.3,204.9 736.8,206.5 737.3,208.6 737.8,211.0 738.3,213.9 738.8,217.1 739.3,220.6 739.8,224.5 740.3,228.6 740.8,233.0 741.3,237.6 741.8,242.4 742.3,247.3 742.8,252.2 743.3,257.3 743.8,262.3 744.3,267.3 744.8,272.2 745.3,277.0 745.8,281.6 746.3,286.0 746.8,290.2 747.3,294.1 747.8,297.7 748.3,300.9 748.8,303.8 749.3,306.3 749.8,308.4 750.3,310.1 750.8,311.3 751.3,312.1 751.8,312.4 752.3,312.2 752.8,311.6 753.3,310.6 753.8,309.1 754.3,307.1 754.8,304.7 755.3,302.0 755.8,298.8 756.3,295.4 756.8,291.6 757.3,287.5 757.8,283.1 758.3,278.6 758.8,273.9 759.3,269.0 759.8,264.0 760.3,259.0 760.8,254.0 761.3,249.0" fill="none" stroke="#5e9ad0" stroke-width="2"/>
<polyline points="77.3,522.9 77.8,517.1 78.3,511.5 78.8,506.1 79.3,501.0 79.8,496.1 80.3,491.6 80.8,487.5 81.3,483.8 81.8,480.6 82.3,477.8 82.8,475.5 83.3,473.7 83.8,472.5 84.3,471.8 84.8,471.6 85.3,472.0 85.8,472.9 86.3,474.4 86.8,476.4 87.3,478.9 87.8,481.9 88.3,485.3 88.8,489.2 89.3,493.5 89.8,498.1 90.3,503.1 90.8,508.4 91.3,513.8 91.8,519.5 92.3,525.3 92.8,531.3 93.3,537.2 93.8,543.2 94.3,549.1 94.8,554.9 95.3,560.5 95.8,566.0 96.3,571.2 96.8,576.1 97.3,580.6 97.8,584.8 98.3,588.6 98.8,592.0 99.3,594.9 99.8,597.3 100.3,599.1 100.8,600.5 101.3,601.3 101.8,601.6 102.3,601.3 102.8,600.5 103.3,599.2 103.8,597.3 104.3,594.9 104.8,592.0 105.3,588.6 105.8,584.8 106.3,580.7 106.8,576.1 107.3,571.2 107.8,566.0 108.3,560.6 108.8,554.9 109.3,549.1 109.8,543.2 110.3,537.3 110.8,531.3 111.3,525.4 111.8,519.6 112.3,513.9 112.8,508.4 113.3,503.1 113.8,498.2 114.3,493.5 114.8,489.2 115.3,485.4 115.8,481.9 116.3,478.9 116.8,476.4 117.3,474.4 117.8,472.9 118.3,472.0 118.8,471.6 119.3,471.8 119.8,472.5 120.3,473.7 120.8,475.5 121.3,477.8 121.8,480.5 122.3,483.8 122.8,487.5 123.3,491.6 123.8,496.1 124.3,500.9 124.8,506.1 125.3,511.5 125.8,517.1 126.3,522.8 126.8,528.7 127.3,534.7 127.8,540.6 128.3,546.6 128.8,552.4 129.3,558.1 129.8,563.7 130.3,569.0 130.8,574.0 131.3,578.7 131.8,583.1 132.3,587.0 132.8,590.6 133.3,593.7 133.8,596.3 134.3,598.4 134.8,600.0 135.3,601.0 135.8,601.5 136.3,601.5 136.8,600.9 137.3,599.8 137.8,598.1 138.3,596.0 138.8,593.3 139.3,590.1 139.8,586.5 140.3,582.5 140.8,578.1 141.3,573.3 141.8,568.3 142.3,562.9 142.8,557.4 143.3,551.6 143.8,545.8 144.3,539.8 144.8,533.9 145.3,527.9 145.8,522.0 146.3,516.3 146.8,510.7 147.3,505.4 147.8,500.3 148.3,495.5 148.8,491.0 149.3,487.0 149.8,483.3 150.3,480.1 150.8,477.4 151.3,475.2 151.8,473.5 152.3,472.3 152.8,471.7 153.3,471.6 153.8,472.1 154.3,473.1 154.8,474.7 155.3,476.7 155.8,479.3 156.3,482.3 156.8,485.9 157.3,489.8 157.8,494.1 158.3,498.8 158.8,503.8 159.3,509.1 159.8,514.6 160.3,520.3 160.8,526.2 161.3,532.1 161.8,538.1 162.3,544.0 162.8,549.9 163.3,555.7 163.8,561.3 164.3,566.7 164.8,571.9 165.3,576.7 165.8,581.2 166.3,585.4 166.8,589.1 167.3,592.4 167.8,595.2 168.3,597.6 168.8,599.4 169.3,600.7 169.8,601.4 170.3,601.6 170.8,601.2 171.3,600.4 171.8,598.9 172.3,597.0 172.8,594.5 173.3,591.5 173.8,588.1 174.3,584.3 174.8,580.0 175.3,575.4 175.8,570.5 176.3,565.2 176.8,559.8 177.3,554.1 177.8,548.3 178.3,542.4 178.8,536.4 179.3,530.5 179.8,524.6 180.3,518.7 180.8,513.1 181.3,507.6 181.8,502.4 182.3,497.5 182.8,492.9 183.3,488.7 183.8,484.8 184.3,481.5 184.8,478.5 185.3,476.1 185.8,474.2 186.3,472.8 186.8,471.9 187.3,471.6 187.8,471.8 188.3,472.6 188.8,473.9 189.3,475.8 189.8,478.1 190.3,481.0 190.8,484.3 191.3,488.1 191.8,492.2 192.3,496.8 192.8,501.6 193.3,506.8 193.8,512.2 194.3,517.9 194.8,523.6 195.3,529.5 195.8,535.5 196.3,541.5 196.8,547.4 197.3,553.2 197.8,558.9 198.3,564.4 198.8,569.7 199.3,574.7 199.8,579.3 200.3,583.7 200.8,587.6 201.3,591.0 201.8,594.1 202.3,596.6 202.8,598.7 203.3,600.2 203.8,601.1 204.3,601.6 204.8,601.5 205.3,600.8 205.8,599.6 206.3,597.9 206.8,595.6 207.3,592.9 207.8,589.7 208.3,586.0 208.8,581.9 209.3,577.4 209.8,572.6 210.3,567.5 210.8,562.2 211.3,556.6 211.8,550.8 212.3,544.9 212.8,539.0 213.3,533.0 213.8,527.1 214.3,521.2 214.8,515.5 215.3,510.0 215.8,504.6 216.3,499.6 216.8,494.8 217.3,490.4 217.8,486.4 218.3,482.9 218.8,479.7 219.3,477.1 219.8,474.9 220.3,473.3 220.8,472.2 221.3,471.7 221.8,471.7 222.3,472.2 222.8,473.3 223.3,474.9 223.8,477.1 224.3,479.7 224.8,482.8 225.3,486.4 225.8,490.4 226.3,494.8 226.8,499.5 227.3,504.6 227.8,509.9 228.3,515.4 228.8,521.1 229.3,527.0 229.8,532.9 230.3,538.9 230.8,544.8 231.3,550.7 231.8,556.5 232.3,562.1 232.8,567.4 233.3,572.6 233.8,577.4 234.3,581.8 234.8,585.9 235.3,589.6 235.8,592.8 236.3,595.6 236.8,597.8 237.3,599.6 237.8,600.8 238.3,601.5 238.8,601.6 239.3,601.2 239.8,600.2 240.3,598.7 240.8,596.7 241.3,594.1 241.8,591.1 242.3,587.6 242.8,583.7 243.3,579.4 243.8,574.7 244.3,569.8 244.8,564.5 245.3,559.0 245.8,553.3 246.3,547.5 246.8,541.5 247.3,535.6 247.8,529.6 248.3,523.7 248.8,517.9 249.3,512.3 249.8,506.9 250.3,501.7 250.8,496.8 251.3,492.3 251.8,488.1 252.3,484.3 252.8,481.0 253.3,478.2 253.8,475.8 254.3,474.0 254.8,472.6 255.3,471.8 255.8,471.6 256.3,471.9 256.8,472.8 257.3,474.2 257.8,476.1 258.3,478.5 258.8,481.4 259.3,484.8 259.8,488.6 260.3,492.8 260.8,497.4 261.3,502.3 261.8,507.6 262.3,513.0 262.8,518.7 263.3,524.5 263.8,530.4 264.3,536.3 264.8,542.3 265.3,548.2 265.8,554.0 266.3,559.7 266.8,565.2 267.3,570.4 267.8,575.3 268.3,580.0 268.8,584.2 269.3,588.1 269.8,591.5 270.3,594.5 270.8,596.9 271.3,598.9 271.8,600.3 272.3,601.2 272.8,601.6 273.3,601.4 273.8,600.7 274.3,599.4 274.8,597.6 275.3,595.3 275.8,592.5 276.3,589.2 276.8,585.4 277.3,581.3 277.8,576.8 278.3,571.9 278.8,566.8 279.3,561.4 279.8,555.8 280.3,550.0 280.8,544.1 281.3,538.2 281.8,532.2 282.3,526.3 282.8,520.4 283.3,514.7 283.8,509.2 284.3,503.9 284.8,498.9 285.3,494.2 285.8,489.9 286.3,485.9 286.8,482.4 287.3,479.3 287.8,476.8 288.3,474.7 288.8,473.1 289.3,472.1 289.8,471.6 290.3,471.7 290.8,472.3 291.3,473.5 291.8,475.2 292.3,477.4 292.8,480.1 293.3,483.3 293.8,486.9 294.3,491.0 294.8,495.4 295.3,500.2 295.8,505.3 296.3,510.6 296.8,516.2 297.3,522.0 297.8,527.8 298.3,533.8 298.8,539.7 299.3,545.7 299.8,551.5 300.3,557.3 300.8,562.8 301.3,568.2 301.8,573.3 302.3,578.0 302.8,582.4 303.3,586.5 303.8,590.1 304.3,593.2 304.8,595.9 305.3,598.1 305.8,599.8 306.3,600.9 306.8,601.5 307.3,601.6 307.8,601.1 308.3,600.0 308.8,598.4 309.3,596.3 309.8,593.7 310.3,590.6 310.8,587.1 311.3,583.1 311.8,578.8 312.3,574.1 312.8,569.0 313.3,563.7 313.8,558.2 314.3,552.5 314.8,546.6 315.3,540.7 315.8,534.8 316.3,528.8 316.8,522.9 317.3,517.1 317.8,511.5 318.3,506.1 318.8,501.0 319.3,496.2 319.8,491.7 320.3,487.6 320.8,483.9 321.3,480.6 321.8,477.8 322.3,475.5 322.8,473.7 323.3,472.5 323.8,471.8 324.3,471.6 324.8,472.0 325.3,472.9 325.8,474.4 326.3,476.4 326.8,478.9 327.3,481.9 327.8,485.3 328.3,489.2 328.8,493.5 329.3,498.1 329.8,503.1 330.3,508.3 330.8,513.8 331.3,519.5 331.8,525.3 332.3,531.2 332.8,537.2 333.3,543.1 333.8,549.0 334.3,554.8 334.8,560.5 335.3,565.9 335.8,571.1 336.3,576.0 336.8,580.6 337.3,584.8 337.8,588.6 338.3,591.9 338.8,594.8 339.3,597.2 339.8,599.1 340.3,600.5 340.8,601.3 341.3,601.6 341.8,601.3 342.3,600.5 342.8,599.2 343.3,597.3 343.8,594.9 344.3,592.0 344.8,588.7 345.3,584.9 345.8,580.7 346.3,576.1 346.8,571.2 347.3,566.0 347.8,560.6 348.3,555.0 348.8,549.2 349.3,543.3 349.8,537.3 350.3,531.4 350.8,525.4 351.3,519.6 351.8,513.9 352.3,508.4 352.8,503.2 353.3,498.2 353.8,493.6 354.3,489.3 354.8,485.4 355.3,481.9 355.8,478.9 356.3,476.4 356.8,474.4 357.3,473.0 357.8,472.0 358.3,471.6 358.8,471.8 359.3,472.5 359.8,473.7 360.3,475.5 360.8,477.7 361.3,480.5 361.8,483.8 362.3,487.5 362.8,491.6 363.3,496.1 363.8,500.9 364.3,506.0 364.8,511.4 365.3,517.0 365.8,522.8 366.3,528.7 366.8,534.6 367.3,540.6 367.8,546.5 368.3,552.3 368.8,558.1 369.3,563.6 369.8,568.9 370.3,573.9 370.8,578.7 371.3,583.0 371.8,587.0 372.3,590.6 372.8,593.7 373.3,596.3 373.8,598.4 374.3,600.0 374.8,601.0 375.3,601.5 375.8,601.5 376.3,600.9 376.8,599.8 377.3,598.2 377.8,596.0 378.3,593.3 378.8,590.2 379.3,586.6 379.8,582.5 380.3,578.1 380.8,573.4 381.3,568.3 381.8,563.0 382.3,557.4 382.8,551.7 383.3,545.8 383.8,539.9 384.3,533.9 384.8,528.0 385.3,522.1 385.8,516.4 386.3,510.8 386.8,505.4 387.3,500.3 387.8,495.5 388.3,491.1 388.8,487.0 389.3,483.4 389.8,480.2 390.3,477.5 390.8,475.2 391.3,473.5 391.8,472.4 392.3,471.7 392.8,471.6 393.3,472.1 393.8,473.1 394.3,474.6 394.8,476.7 395.3,479.3 395.8,482.3 396.3,485.8 396.8,489.8 397.3,494.1 397.8,498.8 398.3,503.8 398.8,509.1 399.3,514.6 399.8,520.3 400.3,526.1 400.8,532.0 401.3,538.0 401.8,544.0 402.3,549.8 402.8,555.6 403.3,561.2 403.8,566.7 404.3,571.8 404.8,576.7 405.3,581.2 405.8,585.3 406.3,589.1 406.8,592.4 407.3,595.2 407.8,597.5 408.3,599.4 408.8,600.6 409.3,601.4 409.8,601.6 410.3,601.3 410.8,600.4 411.3,598.9 411.8,597.0 412.3,594.5 412.8,591.6 413.3,588.2 413.8,584.3 414.3,580.1 414.8,575.5 415.3,570.5 415.8,565.3 416.3,559.8 416.8,554.2 417.3,548.4 417.8,542.4 418.3,536.5 418.8,530.5 419.3,524.6 419.8,518.8 420.3,513.1 420.8,507.7 421.3,502.5 421.8,497.5 422.3,492.9 422.8,488.7 423.3,484.9 423.8,481.5 424.3,478.6 424.8,476.1 425.3,474.2 425.8,472.8 426.3,471.9 426.8,471.6 427.3,471.8 427.8,472.6 428.3,473.9 428.8,475.7 429.3,478.1 429.8,480.9 430.3,484.3 430.8,488.0 431.3,492.2 431.8,496.7 432.3,501.6 432.8,506.8 433.3,512.2 433.8,517.8 434.3,523.6 434.8,529.5 435.3,535.4 435.8,541.4 436.3,547.3 436.8,553.2 437.3,558.9 437.8,564.4 438.3,569.6 438.8,574.6 439.3,579.3 439.8,583.6 440.3,587.5 440.8,591.0 441.3,594.0 441.8,596.6 442.3,598.6 442.8,600.2 443.3,601.1 443.8,601.6 444.3,601.5 444.8,600.8 445.3,599.6 445.8,597.9 446.3,595.6 446.8,592.9 447.3,589.7 447.8,586.0 448.3,582.0 448.8,577.5 449.3,572.7 449.8,567.6 450.3,562.2 450.8,556.6 451.3,550.9 451.8,545.0 452.3,539.0 452.8,533.1 453.3,527.1 453.8,521.3 454.3,515.6 454.8,510.0 455.3,504.7 455.8,499.6 456.3,494.9 456.8,490.5 457.3,486.5 457.8,482.9 458.3,479.8 458.8,477.1 459.3,475.0 459.8,473.3 460.3,472.2 460.8,471.7 461.3,471.7 461.8,472.2 462.3,473.3 462.8,474.9 463.3,477.0 463.8,479.7 464.3,482.8 464.8,486.3 465.3,490.3 465.8,494.7 466.3,499.5 466.8,504.5 467.3,509.8 467.8,515.4 468.3,521.1 468.8,526.9 469.3,532.9 469.8,538.8 470.3,544.8 470.8,550.7 471.3,556.4 471.8,562.0 472.3,567.4 472.8,572.5 473.3,577.3 473.8,581.8 474.3,585.9 474.8,589.6 475.3,592.8 475.8,595.6 476.3,597.8 476.8,599.6 477.3,600.8 477.8,601.5 478.3,601.6 478.8,601.2 479.3,600.2 479.8,598.7 480.3,596.7 480.8,594.1 481.3,591.1 481.8,587.7 482.3,583.8 482.8,579.5 483.3,574.8 483.8,569.8 484.3,564.5 484.8,559.0 485.3,553.4 485.8,547.5 486.3,541.6 486.8,535.6 487.3,529.7 487.8,523.8 488.3,518.0 488.8,512.4 489.3,506.9 489.8,501.8 490.3,496.9 490.8,492.3 491.3,488.2 491.8,484.4 492.3,481.1 492.8,478.2 493.3,475.8 493.8,474.0 494.3,472.6 494.8,471.8 495.3,471.6 495.8,471.9 496.3,472.8 496.8,474.1 497.3,476.0 497.8,478.5 498.3,481.4 498.8,484.8 499.3,488.6 499.8,492.8 500.3,497.4 500.8,502.3 501.3,507.5 501.8,513.0 502.3,518.6 502.8,524.4 503.3,530.3 503.8,536.3 504.3,542.2 504.8,548.1 505.3,554.0 505.8,559.6 506.3,565.1 506.8,570.3 507.3,575.3 507.8,579.9 508.3,584.2 508.8,588.0 509.3,591.5 509.8,594.4 510.3,596.9 510.8,598.9 511.3,600.3 511.8,601.2 512.3,601.6 512.8,601.4 513.3,600.7 513.8,599.4 514.3,597.6 514.8,595.3 515.3,592.5 515.8,589.2 516.3,585.5 516.8,581.3 517.3,576.8 517.8,572.0 518.3,566.8 518.8,561.4 519.3,555.8 519.8,550.1 520.3,544.2 520.8,538.2 521.3,532.2 521.8,526.3 522.3,520.5 522.8,514.8 523.3,509.2 523.8,504.0 524.3,498.9 524.8,494.2 525.3,489.9 525.8,486.0 526.3,482.4 526.8,479.4 527.3,476.8 527.8,474.7 528.3,473.1 528.8,472.1 529.3,471.6 529.8,471.7 530.3,472.3 530.8,473.5 531.3,475.2 531.8,477.4 532.3,480.1 532.8,483.3 533.3,486.9 533.8,490.9 534.3,495.4 534.8,500.1 535.3,505.2 535.8,510.6 536.3,516.2 536.8,521.9 537.3,527.8 537.8,533.7 538.3,539.7 538.8,545.6 539.3,551.5 539.8,557.2 540.3,562.8 540.8,568.1 541.3,573.2 541.8,578.0 542.3,582.4 542.8,586.4 543.3,590.1 543.8,593.2 544.3,595.9 544.8,598.1 545.3,599.8 545.8,600.9 546.3,601.5 546.8,601.6 547.3,601.1 547.8,600.0 548.3,598.4 548.8,596.3 549.3,593.8 549.8,590.7 550.3,587.1 550.8,583.2 551.3,578.8 551.8,574.1 552.3,569.1 552.8,563.8 553.3,558.3 553.8,552.5 554.3,546.7 554.8,540.8 555.3,534.8 555.8,528.9 556.3,523.0 556.8,517.2 557.3,511.6 557.8,506.2 558.3,501.1 558.8,496.2 559.3,491.7 559.8,487.6 560.3,483.9 560.8,480.6 561.3,477.8 561.8,475.5 562.3,473.7 562.8,472.5 563.3,471.8 563.8,471.6 564.3,472.0 564.8,472.9 565.3,474.4 565.8,476.4 566.3,478.8 566.8,481.8 567.3,485.3 567.8,489.1 568.3,493.4 568.8,498.0 569.3,503.0 569.8,508.3 570.3,513.7 570.8,519.4 571.3,525.2 571.8,531.1 572.3,537.1 572.8,543.1 573.3,549.0 573.8,554.8 574.3,560.4 574.8,565.9 575.3,571.1 575.8,576.0 576.3,580.5 576.8,584.7 577.3,588.5 577.8,591.9 578.3,594.8 578.8,597.2 579.3,599.1 579.8,600.5 580.3,601.3 580.8,601.6 581.3,601.3 581.8,600.5 582.3,599.2 582.8,597.3 583.3,594.9 583.8,592.1 584.3,588.7 584.8,584.9 585.3,580.7 585.8,576.2 586.3,571.3 586.8,566.1 587.3,560.7 587.8,555.0 588.3,549.2 588.8,543.3 589.3,537.4 589.8,531.4 590.3,525.5 590.8,519.7 591.3,514.0 591.8,508.5 592.3,503.2 592.8,498.3 593.3,493.6 593.8,489.3 594.3,485.4 594.8,482.0 595.3,479.0 595.8,476.5 596.3,474.5 596.8,473.0 597.3,472.0 597.8,471.6 598.3,471.8 598.8,472.4 599.3,473.7 599.8,475.4 600.3,477.7 600.8,480.5 601.3,483.7 601.8,487.4 602.3,491.5 602.8,496.0 603.3,500.8 603.8,506.0 604.3,511.4 604.8,516.9 605.3,522.7 605.8,528.6 606.3,534.5 606.8,540.5 607.3,546.4 607.8,552.3 608.3,558.0 608.8,563.5 609.3,568.9 609.8,573.9 610.3,578.6 610.8,583.0 611.3,587.0 611.8,590.5 612.3,593.6 612.8,596.2 613.3,598.4 613.8,600.0 614.3,601.0 614.8,601.5 615.3,601.5 615.8,600.9 616.3,599.8 616.8,598.2 617.3,596.0 617.8,593.3 618.3,590.2 618.8,586.6 619.3,582.6 619.8,578.2 620.3,573.4 620.8,568.4 621.3,563.0 621.8,557.5 622.3,551.7 622.8,545.9 623.3,539.9 623.8,534.0 624.3,528.0 624.8,522.2 625.3,516.4 625.8,510.8 626.3,505.5 626.8,500.4 627.3,495.6 627.8,491.1 628.3,487.1 628.8,483.4 629.3,480.2 629.8,477.5 630.3,475.3 630.8,473.5 631.3,472.4 631.8,471.7 632.3,471.6 632.8,472.1 633.3,473.1 633.8,474.6 634.3,476.7 634.8,479.2 635.3,482.3 635.8,485.8 636.3,489.7 636.8,494.0 637.3,498.7 637.8,503.7 638.3,509.0 638.8,514.5 639.3,520.2 639.8,526.1 640.3,532.0 640.8,537.9 641.3,543.9 641.8,549.8 642.3,555.6 642.8,561.2 643.3,566.6 643.8,571.8 644.3,576.6 644.8,581.2 645.3,585.3 645.8,589.0 646.3,592.3 646.8,595.2 647.3,597.5 647.8,599.3 648.3,600.6 648.8,601.4 649.3,601.6 649.8,601.3 650.3,600.4 650.8,599.0 651.3,597.0 651.8,594.6 652.3,591.6 652.8,588.2 653.3,584.4 653.8,580.1 654.3,575.5 654.8,570.6 655.3,565.4 655.8,559.9 656.3,554.2 656.8,548.4 657.3,542.5 657.8,536.5 658.3,530.6 658.8,524.7 659.3,518.9 659.8,513.2 660.3,507.7 660.8,502.5 661.3,497.6 661.8,493.0 662.3,488.8 662.8,484.9 663.3,481.5 663.8,478.6 664.3,476.1 664.8,474.2 665.3,472.8 665.8,471.9 666.3,471.6 666.8,471.8 667.3,472.6 667.8,473.9 668.3,475.7 668.8,478.1 669.3,480.9 669.8,484.2 670.3,488.0 670.8,492.1 671.3,496.7 671.8,501.5 672.3,506.7 672.8,512.1 673.3,517.7 673.8,523.5 674.3,529.4 674.8,535.4 675.3,541.3 675.8,547.3 676.3,553.1 676.8,558.8 677.3,564.3 677.8,569.6 678.3,574.6 678.8,579.3 679.3,583.6 679.8,587.5 680.3,591.0 680.8,594.0 681.3,596.6 681.8,598.6 682.3,600.1 682.8,601.1 683.3,601.6 683.8,601.5 684.3,600.8 684.8,599.6 685.3,597.9 685.8,595.7 686.3,592.9 686.8,589.7 687.3,586.1 687.8,582.0 688.3,577.5 688.8,572.7 689.3,567.6 689.8,562.3 690.3,556.7 690.8,550.9 691.3,545.1 691.8,539.1 692.3,533.1 692.8,527.2 693.3,521.3 693.8,515.6 694.3,510.1 694.8,504.7 695.3,499.7 695.8,494.9 696.3,490.5 696.8,486.5 697.3,482.9 697.8,479.8 698.3,477.1 698.8,475.0 699.3,473.3 699.8,472.2 700.3,471.7 700.8,471.7 701.3,472.2 701.8,473.3 702.3,474.9 702.8,477.0 703.3,479.6 703.8,482.7 704.3,486.3 704.8,490.3 705.3,494.7 705.8,499.4 706.3,504.4 706.8,509.8 707.3,515.3 707.8,521.0 708.3,526.9 708.8,532.8 709.3,538.8 709.8,544.7 710.3,550.6 710.8,556.4 711.3,562.0 711.8,567.3 712.3,572.5 712.8,577.3 713.3,581.8 713.8,585.9 714.3,589.5 714.8,592.8 715.3,595.5 715.8,597.8 716.3,599.6 716.8,600.8 717.3,601.4 717.8,601.6 718.3,601.2 718.8,600.2 719.3,598.7 719.8,596.7 720.3,594.2 720.8,591.2 721.3,587.7 721.8,583.8 722.3,579.5 722.8,574.8 723.3,569.9 723.8,564.6 724.3,559.1 724.8,553.4 725.3,547.6 725.8,541.7 726.3,535.7 726.8,529.7 727.3,523.9 727.8,518.1 728.3,512.4 728.8,507.0 729.3,501.8 729.8,496.9 730.3,492.4 730.8,488.2 731.3,484.4 731.8,481.1 732.3,478.2 732.8,475.8 733.3,474.0 733.8,472.6 734.3,471.9 734.8,471.6 735.3,471.9 735.8,472.7 736.3,474.1 736.8,476.0 737.3,478.4 737.8,481.4 738.3,484.7 738.8,488.5 739.3,492.7 739.8,497.3 740.3,502.2 740.8,507.4 741.3,512.9 741.8,518.5 742.3,524.3 742.8,530.3 743.3,536.2 743.8,542.2 744.3,548.1 744.8,553.9 745.3,559.6 745.8,565.1 746.3,570.3 746.8,575.2 747.3,579.9 747.8,584.1 748.3,588.0 748.8,591.4 749.3,594.4 749.8,596.9 750.3,598.9 750.8,600.3 751.3,601.2 751.8,601.6 752.3,601.4 752.8,600.7 753.3,599.4 753.8,597.6 754.3,595.3 754.8,592.5 755.3,589.2 755.8,585.5 756.3,581.4 756.8,576.9 757.3,572.0 757.8,566.9 758.3,561.5 758.8,555.9 759.3,550.1 759.8,544.2 760.3,538.3 760.8,532.3 761.3,526.4" fill="none" stroke="#d84838" stroke-width="2"/>
</svg>
<div id="t12" style="position:absolute;top:174.5px;font-size:12.5px;line-height:12.5px;color:#e8e8e8;font-family:'Liberation Sans',sans-serif;font-weight:normal;white-space:nowrap;left:52.1px;transform-origin:0 50%;transform:scaleX(0.8772);">電圧 (mV)</div>
<div id="t13" style="position:absolute;top:174.5px;font-size:12.5px;line-height:12.5px;color:#e8e8e8;font-family:'Liberation Sans',sans-serif;font-weight:normal;white-space:nowrap;left:737.0px;transform-origin:0 50%;transform:scaleX(0.9057);">電流 (pA)</div>
<div id="t14" style="position:absolute;top:217.0px;font-size:11px;line-height:11px;color:#e6e6e6;font-family:'Liberation Sans',sans-serif;font-weight:normal;white-space:nowrap;left:73.2px;transform-origin:100% 50%;transform:translateX(-100%) ;">720</div>
<div id="t15" style="position:absolute;top:269.7px;font-size:11px;line-height:11px;color:#e6e6e6;font-family:'Liberation Sans',sans-serif;font-weight:normal;white-space:nowrap;left:73.2px;transform-origin:100% 50%;transform:translateX(-100%) ;">600</div>
<div id="t16" style="position:absolute;top:322.3px;font-size:11px;line-height:11px;color:#e6e6e6;font-family:'Liberation Sans',sans-serif;font-weight:normal;white-space:nowrap;left:73.2px;transform-origin:100% 50%;transform:translateX(-100%) ;">480</div>
<div id="t17" style="position:absolute;top:375.0px;font-size:11px;line-height:11px;color:#e6e6e6;font-family:'Liberation Sans',sans-serif;font-weight:normal;white-space:nowrap;left:73.2px;transform-origin:100% 50%;transform:translateX(-100%) ;">360</div>
<div id="t18" style="position:absolute;top:427.6px;font-size:11px;line-height:11px;color:#e6e6e6;font-family:'Liberation Sans',sans-serif;font-weight:normal;white-space:nowrap;left:73.2px;transform-origin:100% 50%;transform:translateX(-100%) ;">240</div>
<div id="t19" style="position:absolute;top:480.3px;font-size:11px;line-height:11px;color:#e6e6e6;font-family:'Liberation Sans',sans-serif;font-weight:normal;white-space:nowrap;left:73.2px;transform-origin:100% 50%;transform:translateX(-100%) ;">120</div>
<div id="t20" style="position:absolute;top:532.9px;font-size:11px;line-height:11px;color:#e6e6e6;font-family:'Liberation Sans',sans-serif;font-weight:normal;white-space:nowrap;left:73.2px;transform-origin:100% 50%;transform:translateX(-100%) ;">0</div>
<div id="t21" style="position:absolute;top:585.5px;font-size:11px;line-height:11px;color:#e6e6e6;font-family:'Liberation Sans',sans-serif;font-weight:normal;white-space:nowrap;left:73.2px;transform-origin:100% 50%;transform:translateX(-100%) ;">-120</div>
<div id="t22" style="position:absolute;top:220.3px;font-size:11px;line-height:11px;color:#e6e6e6;font-family:'Liberation Sans',sans-serif;font-weight:normal;white-space:nowrap;left:765.6px;transform-origin:0 50%;transform:scaleX(1.0109);">-11.700780</div>
<div id="t23" style="position:absolute;top:271.3px;font-size:11px;line-height:11px;color:#e6e6e6;font-family:'Liberation Sans',sans-serif;font-weight:normal;white-space:nowrap;left:765.6px;transform-origin:0 50%;transform:scaleX(1.0109);">-11.700920</div>
<div id="t24" style="position:absolute;top:322.3px;font-size:11px;line-height:11px;color:#e6e6e6;font-family:'Liberation Sans',sans-serif;font-weight:normal;white-space:nowrap;left:765.6px;transform-origin:0 50%;transform:scaleX(1.0109);">-11.701060</div>
<div id="t25" style="position:absolute;top:373.3px;font-size:11px;line-height:11px;color:#e6e6e6;font-family:'Liberation Sans',sans-serif;font-weight:normal;white-space:nowrap;left:765.6px;transform-origin:0 50%;transform:scaleX(1.0109);">-11.701200</div>
<div id="t26" style="position:absolute;top:424.3px;font-size:11px;line-height:11px;color:#e6e6e6;font-family:'Liberation Sans',sans-serif;font-weight:normal;white-space:nowrap;left:765.6px;transform-origin:0 50%;transform:scaleX(1.0109);">-11.701340</div>
<div id="t27" style="position:absolute;top:475.3px;font-size:11px;line-height:11px;color:#e6e6e6;font-family:'Liberation Sans',sans-serif;font-weight:normal;white-space:nowrap;left:765.6px;transform-origin:0 50%;transform:scaleX(1.0109);">-11.701480</div>
<div id="t28" style="position:absolute;top:526.3px;font-size:11px;line-height:11px;color:#e6e6e6;font-family:'Liberation Sans',sans-serif;font-weight:normal;white-space:nowrap;left:765.6px;transform-origin:0 50%;transform:scaleX(1.0109);">-11.701620</div>
<div id="t29" style="position:absolute;top:577.3px;font-size:11px;line-height:11px;color:#e6e6e6;font-family:'Liberation Sans',sans-serif;font-weight:normal;white-space:nowrap;left:765.6px;transform-origin:0 50%;transform:scaleX(1.0109);">-11.701760</div>
<div id="t30" style="position:absolute;top:622.0px;font-size:11px;line-height:11px;color:#e6e6e6;font-family:'Liberation Sans',sans-serif;font-weight:normal;white-space:nowrap;left:117.2px;transform-origin:50% 50%;transform:translateX(-50%) ;">406</div>
<div id="t31" style="position:absolute;top:622.0px;font-size:11px;line-height:11px;color:#e6e6e6;font-family:'Liberation Sans',sans-serif;font-weight:normal;white-space:nowrap;left:213.0px;transform-origin:50% 50%;transform:translateX(-50%) ;">420</div>
<div id="t32" style="position:absolute;top:622.0px;font-size:11px;line-height:11px;color:#e6e6e6;font-family:'Liberation Sans',sans-serif;font-weight:normal;white-space:nowrap;left:308.8px;transform-origin:50% 50%;transform:translateX(-50%) ;">434</div>
<div id="t33" style="position:absolute;top:622.0px;font-size:11px;line-height:11px;color:#e6e6e6;font-family:'Liberation Sans',sans-serif;font-weight:normal;white-space:nowrap;left:404.6px;transform-origin:50% 50%;transform:translateX(-50%) ;">448</div>
<div id="t34" style="position:absolute;top:622.0px;font-size:11px;line-height:11px;color:#e6e6e6;font-family:'Liberation Sans',sans-serif;font-weight:normal;white-space:nowrap;left:500.4px;transform-origin:50% 50%;transform:translateX(-50%) ;">462</div>
<div id="t35" style="position:absolute;top:622.0px;font-size:11px;line-height:11px;color:#e6e6e6;font-family:'Liberation Sans',sans-serif;font-weight:normal;white-space:nowrap;left:596.2px;transform-origin:50% 50%;transform:translateX(-50%) ;">476</div>
<div id="t36" style="position:absolute;top:622.0px;font-size:11px;line-height:11px;color:#e6e6e6;font-family:'Liberation Sans',sans-serif;font-weight:normal;white-space:nowrap;left:692.0px;transform-origin:50% 50%;transform:translateX(-50%) ;">490</div>
<div id="t37" style="position:absolute;top:637.7px;font-size:12px;line-height:12px;color:#e6e6e6;font-family:'Liberation Sans',sans-serif;font-weight:normal;white-space:nowrap;left:418.0px;transform-origin:50% 50%;transform:translateX(-50%) ;">時間 (ms)</div>
<div class="abs" style="left:838px;top:120px;width:102px;height:700px;background:#ededed;"></div>
<div class="abs" style="left:843.5px;top:127px;width:100px;height:32.5px;background:#ffffff;border:1px solid #c8c8c8"></div>
<svg style="left:852px;top:134px" width="22" height="20"><circle cx="8.5" cy="8" r="5.8" fill="none" stroke="#5a5a5a" stroke-width="2.6"/><path d="M12.5 12 L17.5 17" stroke="#5a5a5a" stroke-width="3" stroke-linecap="round"/></svg>
<div id="t38" style="position:absolute;top:135.3px;font-size:17px;line-height:17px;color:#b5b5b5;font-family:'Liberation Sans',sans-serif;font-weight:normal;white-space:nowrap;left:884.0px;transform-origin:0 50%;">フィルター</div>
<div class="abs" style="left:843px;top:160px;width:97px;height:32px;background:#efefef;"></div>
<div id="t39" style="position:absolute;top:168.3px;font-size:17px;line-height:17px;color:#222;font-family:'Liberation Sans',sans-serif;font-weight:normal;white-space:nowrap;left:847.0px;transform-origin:0 50%;">信号</div>
<div class="abs" style="left:843px;top:192px;width:97px;height:27px;background:#ffffff;"></div>
<div class="abs" style="left:843px;top:218.5px;width:97px;height:1px;background:#ececec;"></div>
<div id="t40" style="position:absolute;top:197.3px;font-size:17px;line-height:17px;color:#1a1a1a;font-family:'Liberation Sans',sans-serif;font-weight:normal;white-space:nowrap;left:845.5px;transform-origin:0 50%;transform:scaleX(1.0159);">V(+12V)</div>
<div class="abs" style="left:843px;top:219px;width:97px;height:17px;overflow:hidden;background:#fff"><div style="position:absolute;left:2px;top:8px;font-size:17px;line-height:17px;color:#1a1a1a;white-space:nowrap">V(Net-_C1-P</div></div>
<div class="abs" style="left:869px;top:245.5px;width:75px;height:7.5px;background:#888888;border-radius:4px"></div>
<div class="abs" style="left:843px;top:266px;width:97px;height:1px;background:#d8d8d8;"></div>
<div class="abs" style="left:843px;top:267px;width:97px;height:29px;background:#efefef;"></div>
<div class="abs" style="left:887px;top:267px;width:1px;height:29px;background:#dcdcdc;"></div>
<div class="abs" style="left:845px;top:272px;width:42px;height:22px;overflow:hidden"><div style="position:absolute;left:0;top:1px;font-size:17px;line-height:17px;color:#222;white-space:nowrap;transform:scaleX(0.88);transform-origin:0 50%">カーソル</div></div>
<div class="abs" style="left:843px;top:296px;width:97px;height:270px;background:#ffffff;"></div>
<div class="abs" style="left:869px;top:575.5px;width:75px;height:7.5px;background:#888888;border-radius:4px"></div>
<div class="abs" style="left:843px;top:596px;width:97px;height:1px;background:#d8d8d8;"></div>
<div class="abs" style="left:843px;top:597px;width:97px;height:30px;background:#efefef;"></div>
<div id="t41" style="position:absolute;top:603.8px;font-size:17px;line-height:17px;color:#222;font-family:'Liberation Sans',sans-serif;font-weight:normal;white-space:nowrap;left:847.0px;transform-origin:0 50%;">計測</div>
<div class="abs" style="left:843px;top:627px;width:97px;height:28px;background:#ffffff;"></div>
<div class="abs" style="left:843px;top:655px;width:97px;height:1px;background:#ececec;"></div>
<div class="abs" style="left:843px;top:656px;width:97px;height:13px;background:#ffffff;"></div>
<div class="abs" style="left:869px;top:677.5px;width:75px;height:7.5px;background:#888888;border-radius:4px"></div>
<div class="abs" style="left:880px;top:0;width:59px;height:820px;background:linear-gradient(to right, rgba(0,0,0,0) 0%, rgba(0,0,0,0.035) 60%, rgba(0,0,0,0.09) 100%)"></div>
<div class="abs" style="left:0px;top:660px;width:838px;height:13px;background:#f0f0f0;"></div>
<div class="abs" style="left:0px;top:673px;width:812px;height:129px;background:#ffffff;"></div>
<div class="abs" style="left:812px;top:673px;width:26px;height:129px;background:#efefef;"></div>
<div class="abs" style="left:820.5px;top:747px;width:7px;height:26px;background:#858585;border-radius:3.5px"></div>
<div class="abs" style="left:0;top:673px;width:812px;height:129px;overflow:hidden">
<div style="position:absolute;left:5px;top:2.0px;font-family:'Liberation Mono',monospace;font-size:18px;line-height:18px;color:#111;white-space:pre;transform:scaleX(0.8333);transform-origin:0 50%"> Reference value :  4.00028e-01</div>
<div style="position:absolute;left:5px;top:20.0px;font-family:'Liberation Mono',monospace;font-size:18px;line-height:18px;color:#111;white-space:pre;transform:scaleX(0.8333);transform-origin:0 50%">No. of Data Rows : 1001</div>
<div style="position:absolute;left:5px;top:38.0px;font-family:'Liberation Mono',monospace;font-size:18px;line-height:18px;color:#111;white-space:pre;transform:scaleX(0.8333);transform-origin:0 50%">Background thread stopped with timeout = 0</div>
<div style="position:absolute;left:5px;top:56.0px;font-family:'Liberation Mono',monospace;font-size:18px;line-height:18px;color:#111;white-space:pre;transform:scaleX(0.8333);transform-origin:0 50%">List of plots available:</div>
<div style="position:absolute;left:5px;top:74.0px;font-family:'Liberation Mono',monospace;font-size:18px;line-height:18px;color:#111;white-space:pre;transform:scaleX(0.8333);transform-origin:0 50%">Current tran1   KiCad schematic (Transient Analysis)</div>
<div style="position:absolute;left:5px;top:92.0px;font-family:'Liberation Mono',monospace;font-size:18px;line-height:18px;color:#111;white-space:pre;transform:scaleX(0.8333);transform-origin:0 50%">const   Constant values (constants)</div>
<div style="position:absolute;left:5px;top:110.0px;font-family:'Liberation Mono',monospace;font-size:18px;line-height:18px;color:#111;white-space:pre;transform:scaleX(0.8333);transform-origin:0 50%">Note: Codel model file loading path is ¥¥Keis Syn220¥docs¥Audio¥00-Project-Loudspeaker¥Cl</div>
</div>
<div class="abs" style="left:0px;top:802px;width:838px;height:18px;background:#f0f0f0;"></div>
<div class="abs" style="left:27px;top:811px;width:468px;height:7px;background:#858585;border-radius:3.5px"></div>
<svg style="left:11px;top:86px" width="38" height="32" viewBox="0 0 38 32"><path d="M1 4 Q1 1 4 1 H12 L16 5 H31 Q33 5 33 7 V11 H9 L1 29 Z" fill="#4d4d4d"/><path d="M8 13 H37 L29 31 H2 Z" fill="#4d4d4d"/></svg>
<svg style="left:62px;top:85px" width="34" height="34" viewBox="0 0 34 34"><path d="M2 2 H26 L32 8 V32 Q32 33 31 33 H3 Q2 33 2 32 Z" fill="#4d4d4d"/><rect x="8" y="2.5" width="15" height="10" fill="#fff"/><rect x="17" y="4" width="4" height="7" fill="#4d4d4d"/><rect x="7" y="18" width="20" height="12" fill="#fff"/></svg>
<div class="abs" style="left:107.5px;top:80px;width:1px;height:42px;background:#b4b4b4;"></div>
<svg style="left:121px;top:85px" width="36" height="36" viewBox="0 0 36 36"><circle cx="16.5" cy="16.1" r="15.3" fill="#fff" stroke="#4d4d4d" stroke-width="2"/><path d="M1.5 18 H4 L6.5 10.5 L9 21 L11.5 8 L14 21 L17.5 5.5 L20.5 20 L22 17.5 H24" fill="none" stroke="#2a7fc0" stroke-width="1.7" stroke-linejoin="round"/><line x1="2" y1="18" x2="23" y2="18" stroke="#2a7fc0" stroke-width="0.9"/><circle cx="24.1" cy="24.1" r="11" fill="#f0f0f0"/><circle cx="24.1" cy="24.1" r="9.3" fill="#c0203a"/><path d="M24.1 17.3 V30.9 M17.3 24.1 H30.9" stroke="#fff" stroke-width="3.4"/></svg>
<svg style="left:170.5px;top:85px" width="36" height="36" viewBox="0 0 36 36"><circle cx="16.5" cy="16.1" r="15.3" fill="#fff" stroke="#4d4d4d" stroke-width="2"/><path d="M1.5 18 H4 L6.5 10.5 L9 21 L11.5 8 L14 21 L17.5 5.5 L20.5 20 L22 17.5 H24" fill="none" stroke="#2a7fc0" stroke-width="1.7" stroke-linejoin="round"/><line x1="2" y1="18" x2="23" y2="18" stroke="#2a7fc0" stroke-width="0.9"/><circle cx="24.6" cy="24.6" r="11" fill="#f0f0f0"/><g transform="translate(24.6,24.6)"><circle r="7" fill="#c0203a"/><g fill="#c0203a"><rect x="-2.2" y="-9.5" width="4.4" height="19"/><rect x="-2.2" y="-9.5" width="4.4" height="19" transform="rotate(60)"/><rect x="-2.2" y="-9.5" width="4.4" height="19" transform="rotate(-60)"/></g><circle r="3.4" fill="#fff"/></g></svg>
<div class="abs" style="left:214px;top:80px;width:1px;height:42px;background:#b4b4b4;"></div>
<svg style="left:230px;top:86px" width="28" height="31" viewBox="0 0 28 31"><path d="M0.5 0.5 L27 15.5 L0.5 30.5 Z" fill="#1f7ac8"/></svg>
<div class="abs" style="left:280px;top:87.7px;width:27px;height:27.3px;background:#a5cdee;"></div>
<div class="abs" style="left:321.5px;top:80px;width:1px;height:42px;background:#b4b4b4;"></div>
<svg style="left:335px;top:84.5px" width="34" height="34" viewBox="0 0 34 34"><circle cx="14" cy="14" r="11.5" fill="none" stroke="#4d4d4d" stroke-width="3"/><path d="M22.5 22.5 L31 31" stroke="#4d4d4d" stroke-width="3.5" stroke-linecap="round"/><path d="M14 8 V20 M8 14 H20" stroke="#4d4d4d" stroke-width="3.2"/></svg>
<svg style="left:384px;top:84.5px" width="34" height="34" viewBox="0 0 34 34"><circle cx="14" cy="14" r="11.5" fill="none" stroke="#4d4d4d" stroke-width="3"/><path d="M22.5 22.5 L31 31" stroke="#4d4d4d" stroke-width="3.5" stroke-linecap="round"/><path d="M8 14 H20" stroke="#4d4d4d" stroke-width="3.2"/></svg>
<svg style="left:0;top:0" width="940" height="130"><path d="M431.9 101.5 L435.75 92.5 V97.0 H438.9 V106.0 H435.75 V110.5 Z" fill="#4d4d4d"/><circle cx="449.7" cy="101.5" r="6.9" fill="none" stroke="#4d4d4d" stroke-width="1.6"/><path d="M454.59999999999997 106.4 L459.7 111.5" stroke="#4d4d4d" stroke-width="2.2" stroke-linecap="round"/><path d="M445.7 101.5 H453.7" stroke="#4d4d4d" stroke-width="1.5"/><path d="M449.7 97.5 V105.5" stroke="#4d4d4d" stroke-width="1.5"/><path d="M467 101.5 L463.15 92.5 V97.0 H460 V106.0 H463.15 V110.5 Z" fill="#4d4d4d"/><path d="M487.7 101.5 L483.84999999999997 92.5 V97.0 H480.7 V106.0 H483.84999999999997 V110.5 Z" fill="#4d4d4d"/><circle cx="498.5" cy="101.5" r="6.9" fill="none" stroke="#4d4d4d" stroke-width="1.6"/><path d="M503.4 106.4 L508.5 111.5" stroke="#4d4d4d" stroke-width="2.2" stroke-linecap="round"/><path d="M494.5 101.5 H502.5" stroke="#4d4d4d" stroke-width="1.5"/><path d="M509.3 101.5 L513.15 92.5 V97.0 H516.3 V106.0 H513.15 V110.5 Z" fill="#4d4d4d"/><path d="M547.3 84 L556.3 87.85 H551.8 V91 H542.8 V87.85 H538.3 Z" fill="#4d4d4d"/><circle cx="547.3" cy="101.5" r="6.9" fill="none" stroke="#4d4d4d" stroke-width="1.6"/><path d="M552.1999999999999 106.4 L557.3 111.5" stroke="#4d4d4d" stroke-width="2.2" stroke-linecap="round"/><path d="M543.3 101.5 H551.3" stroke="#4d4d4d" stroke-width="1.5"/><path d="M547.3 97.5 V105.5" stroke="#4d4d4d" stroke-width="1.5"/><path d="M547.3 119 L556.3 115.15 H551.8 V112 H542.8 V115.15 H538.3 Z" fill="#4d4d4d"/><path d="M596.6 91 L605.6 87.15 H601.1 V84 H592.1 V87.15 H587.6 Z" fill="#4d4d4d"/><circle cx="596.6" cy="101.5" r="6.9" fill="none" stroke="#4d4d4d" stroke-width="1.6"/><path d="M601.5 106.4 L606.6 111.5" stroke="#4d4d4d" stroke-width="2.2" stroke-linecap="round"/><path d="M592.6 101.5 H600.6" stroke="#4d4d4d" stroke-width="1.5"/><path d="M596.6 112 L605.6 115.85 H601.1 V119 H592.1 V115.85 H587.6 Z" fill="#4d4d4d"/></svg>
<svg style="left:629px;top:84.5px" width="34" height="34" viewBox="0 0 34 34"><circle cx="14" cy="14" r="11.5" fill="none" stroke="#4d4d4d" stroke-width="3"/><path d="M22.5 22.5 L31 31" stroke="#4d4d4d" stroke-width="3.5" stroke-linecap="round"/><path d="M9 7 H16 L20 11 V21 H9 Z" fill="#8a8a8a"/></svg>
<div class="abs" style="left:673.5px;top:80px;width:1px;height:42px;background:#b4b4b4;"></div>
<svg style="left:684px;top:85px" width="38" height="34" viewBox="0 0 38 34"><path d="M2 32 L14 20" stroke="#4d4d4d" stroke-width="2"/><path d="M9 23 L23 9 L27 13 L13 27 Z" fill="#4d4d4d"/><path d="M20 12 L26 6 L28 8 L22 14 Z" fill="#4d4d4d"/><path d="M26 7 Q32 0 35 4 Q37 8 32 14 Q28 20 30 24 Q32 27 36 24" fill="none" stroke="#4d4d4d" stroke-width="1.6"/></svg>
<svg style="left:736px;top:85px" width="34" height="34" viewBox="0 0 34 34"><path d="M2 32 L16 18" stroke="#4d4d4d" stroke-width="2.2"/><path d="M14 20 L26 8 L29 11 L17 23 Z" fill="#4d4d4d"/><path d="M24 5 L29 1 L33 5 L29 10 Z" fill="#4d4d4d"/></svg>
<div class="abs" style="left:780px;top:80px;width:1px;height:42px;background:#b4b4b4;"></div>
<svg style="left:794px;top:85px" width="34" height="34" viewBox="0 0 34 34"><path d="M4 1 V33 M1 29 H33" stroke="#4d4d4d" stroke-width="3"/><path d="M6.9 8.5 H9.6 V23.4 H17 V8.5 H28.5 V23.4 H32" fill="none" stroke="#2a7fc0" stroke-width="1.7"/></svg>
<svg style="left:840px;top:83px" width="38" height="36" viewBox="0 0 38 36"><rect x="4" y="1" width="33" height="34" rx="2" fill="#b8b8b8"/><rect x="0.5" y="4" width="29" height="13" fill="#2a7fc0"/><text x="15" y="15.5" font-family="Liberation Sans" font-weight="bold" font-size="13" text-anchor="middle" fill="#fff">NET</text><g fill="#4d4d4d"><rect x="14" y="20" width="20" height="3"/><rect x="14" y="25" width="20" height="3"/><rect x="14" y="30" width="20" height="3"/><circle cx="10" cy="21.5" r="1.2"/><circle cx="10" cy="26.5" r="1.2"/><circle cx="10" cy="31.5" r="1.2"/></g></svg>
<div class="abs" style="left:939px;top:0px;width:987px;height:820px;background:#f0f0f0;"></div>
<div class="abs" style="left:938.5px;top:0px;width:1.5px;height:820px;background:#8c8c8c;"></div>
<div class="abs" style="left:940px;top:0px;width:986px;height:4px;background:#ececec;"></div>
<div class="abs" style="left:940px;top:4px;width:986px;height:29px;background:#ffffff;"></div>
<div id="t42" style="position:absolute;top:12.6px;font-size:17px;line-height:17px;color:#5c5c5c;font-family:'Liberation Sans',sans-serif;font-weight:normal;white-space:nowrap;left:951.3px;transform-origin:0 50%;transform:scaleX(0.7947);">ファイル (F)</div>
<div id="t43" style="position:absolute;top:12.6px;font-size:17px;line-height:17px;color:#5c5c5c;font-family:'Liberation Sans',sans-serif;font-weight:normal;white-space:nowrap;left:1048.0px;transform-origin:0 50%;transform:scaleX(0.9803);">編集 (E)</div>
<div id="t44" style="position:absolute;top:12.6px;font-size:17px;line-height:17px;color:#5c5c5c;font-family:'Liberation Sans',sans-serif;font-weight:normal;white-space:nowrap;left:1130.4px;transform-origin:0 50%;transform:scaleX(1.0049);">表示 (V)</div>
<div id="t45" style="position:absolute;top:12.6px;font-size:17px;line-height:17px;color:#5c5c5c;font-family:'Liberation Sans',sans-serif;font-weight:normal;white-space:nowrap;left:1214.8px;transform-origin:0 50%;transform:scaleX(0.9836);">配置 (P)</div>
<div id="t46" style="position:absolute;top:12.6px;font-size:17px;line-height:17px;color:#5c5c5c;font-family:'Liberation Sans',sans-serif;font-weight:normal;white-space:nowrap;left:1297.9px;transform-origin:0 50%;transform:scaleX(0.9945);">検査 (I)</div>
<div id="t47" style="position:absolute;top:12.6px;font-size:17px;line-height:17px;color:#5c5c5c;font-family:'Liberation Sans',sans-serif;font-weight:normal;white-space:nowrap;left:1375.2px;transform-origin:0 50%;transform:scaleX(0.8208);">ツール (T)</div>
<div id="t48" style="position:absolute;top:12.6px;font-size:17px;line-height:17px;color:#5c5c5c;font-family:'Liberation Sans',sans-serif;font-weight:normal;white-space:nowrap;left:1462.0px;transform-origin:0 50%;transform:scaleX(0.9946);">設定 (r)</div>
<div id="t49" style="position:absolute;top:12.6px;font-size:17px;line-height:17px;color:#5c5c5c;font-family:'Liberation Sans',sans-serif;font-weight:normal;white-space:nowrap;left:1540.9px;transform-origin:0 50%;transform:scaleX(0.8975);">ヘルプ (H)</div>
<div class="abs" style="left:940px;top:33px;width:986px;height:54px;background:#f0f0f0;"></div>
<div class="abs" style="left:940px;top:87px;width:986px;height:1px;background:#c4c4c4;"></div>
<div class="abs" style="left:940px;top:88px;width:52px;height:732px;background:#f0f0f0;"></div>
<div class="abs" style="left:992px;top:88px;width:1px;height:732px;background:#c8c8c8;"></div>
<div class="abs" style="left:993px;top:88px;width:933px;height:732px;background:#f5f4ef;"></div>
<svg style="left:954px;top:45px" width="34" height="34" viewBox="0 0 34 34"><path d="M2 2 H26 L32 8 V32 Q32 33 31 33 H3 Q2 33 2 32 Z" fill="#4d4d4d"/><rect x="8" y="2.5" width="15" height="10" fill="#fff"/><rect x="17" y="4" width="4" height="7" fill="#4d4d4d"/><rect x="7" y="18" width="20" height="12" fill="#fff"/></svg>
<div class="abs" style="left:999.5px;top:40px;width:1px;height:42px;background:#b4b4b4;"></div>
<svg style="left:1012px;top:45px" width="36" height="34" viewBox="0 0 36 34"><rect x="1" y="1" width="33" height="32" rx="6" fill="#d6cbb4"/><path d="M13 2 V26 M1 26 H14 M14 10 L22 10 M24 4 H33 V12" stroke="#222" stroke-width="2.5" fill="none"/><path d="M12 26 L16 22 L16 30 Z" fill="#222"/><path d="M10 9 L14 6 L14 13 Z" fill="#222"/><rect x="24" y="2" width="9" height="4" fill="#777"/><rect x="29" y="10" width="5" height="8" fill="#777"/><g transform="translate(24,24)"><circle r="8" fill="#c0203a"/><g fill="#c0203a"><rect x="-2" y="-11" width="4" height="22"/><rect x="-11" y="-2" width="22" height="4"/><rect x="-2" y="-11" width="4" height="22" transform="rotate(45)"/><rect x="-2" y="-11" width="4" height="22" transform="rotate(-45)"/></g><circle r="3.3" fill="#f0e8d8"/></g></svg>
<div class="abs" style="left:1057.5px;top:40px;width:1px;height:42px;background:#b4b4b4;"></div>
<svg style="left:1069px;top:45px" width="34" height="34" viewBox="0 0 34 34"><path d="M4 1 V33 M1 1 H7 M1 33 H7" stroke="#4d4d4d" stroke-width="2" fill="none"/><path d="M7 1 H24 L31 8 V28 H7 Z" fill="#fff" stroke="#4d4d4d" stroke-width="2"/><path d="M7 32 H31 M7 30 V34 M31 30 V34" stroke="#4d4d4d" stroke-width="2" fill="none"/></svg>
<svg style="left:1117px;top:45px" width="38" height="34" viewBox="0 0 38 34"><rect x="8" y="1" width="22" height="8" fill="#fff" stroke="#4d4d4d" stroke-width="2"/><path d="M3 9 H35 Q37 9 37 11 V25 H30 V20 H8 V25 H1 V11 Q1 9 3 9 Z" fill="#4d4d4d"/><path d="M8 16 H30 V33 H12 L8 29 Z" fill="#fff" stroke="#4d4d4d" stroke-width="2"/></svg>
<svg style="left:1166px;top:45px" width="38" height="34" viewBox="0 0 38 34"><rect x="10" y="1" width="18" height="8" fill="#fff" stroke="#4d4d4d" stroke-width="2"/><path d="M1 9 H37 V17 H1 Z" fill="#4d4d4d"/><path d="M4 17 V33 M1 33 H8 M34 17 V33 M30 33 H37" stroke="#4d4d4d" stroke-width="2"/><path d="M10 14 H28 V28 H14 L10 24 Z" fill="#fff" stroke="#4d4d4d" stroke-width="2"/></svg>
<div class="abs" style="left:1213.5px;top:40px;width:1px;height:42px;background:#b4b4b4;"></div>
<svg style="left:1230px;top:45px" width="32" height="34" viewBox="0 0 32 34"><rect x="11" y="1" width="8" height="5" fill="#4d4d4d"/><path d="M1 6 H24 V29 H1 Z" fill="#b0b0b0" stroke="#4d4d4d" stroke-width="2"/><path d="M10 11 H30 V33 H10 Z" fill="#fff" stroke="#4d4d4d" stroke-width="2"/></svg>
<div class="abs" style="left:1271.5px;top:40px;width:1px;height:42px;background:#b4b4b4;"></div>
<div class="abs" style="left:1378.5px;top:40px;width:1px;height:42px;background:#b4b4b4;"></div>
<svg style="left:0;top:0" width="1926" height="90"><path d="M1290.3 49.5 A14.3 14.3 0 1 1 1289 71.5" fill="none" stroke="#4d4d4d" stroke-width="3"/><path d="M1287.8 43.5 V55 L1297 57.5" fill="none" stroke="#4d4d4d" stroke-width="3"/><path d="M1360.2 49.5 A14.3 14.3 0 1 0 1361.5 71.5" fill="none" stroke="#c8c8c8" stroke-width="3"/><path d="M1362.7 43.5 V55 L1353.5 57.5" fill="none" stroke="#c8c8c8" stroke-width="3"/><circle cx="1411.4" cy="58.2" r="12.5" fill="none" stroke="#4d4d4d" stroke-width="3"/><path d="M1402.5 67.5 L1393.5 76.5" stroke="#4d4d4d" stroke-width="3.5" stroke-linecap="round"/><text x="1411.4" y="64.5" font-family="Liberation Sans" font-weight="bold" font-size="16" text-anchor="middle" fill="#4d4d4d">A</text><text x="1449.3" y="61.5" font-family="Liberation Sans" font-weight="bold" font-size="22" text-anchor="middle" fill="#4d4d4d">A</text><text x="1468.5" y="77.7" font-family="Liberation Sans" font-weight="bold" font-size="21" text-anchor="middle" fill="#4d4d4d">B</text><path d="M1449.5 62.5 Q1449 69.5 1456 69.5" fill="none" stroke="#c0203a" stroke-width="2.8"/><path d="M1455 65 L1460.5 69.5 L1455 74 Z" fill="#c0203a"/></svg>
<div class="abs" style="left:1485px;top:40px;width:1px;height:42px;background:#b4b4b4;"></div>
<svg style="left:1498px;top:44px" width="36" height="36" viewBox="0 0 36 36"><path d="M4 18 A14 14 0 0 1 29 10" fill="none" stroke="#4d4d4d" stroke-width="3"/><path d="M32 18 A14 14 0 0 1 7 26" fill="none" stroke="#4d4d4d" stroke-width="3"/><path d="M31 2 V12 H21" fill="none" stroke="#4d4d4d" stroke-width="3"/><path d="M5 34 V24 H15" fill="none" stroke="#4d4d4d" stroke-width="3"/></svg>
<svg style="left:1547px;top:45px" width="34" height="34" viewBox="0 0 34 34"><circle cx="14" cy="14" r="11.5" fill="none" stroke="#4d4d4d" stroke-width="3"/><path d="M22.5 22.5 L31 31" stroke="#4d4d4d" stroke-width="3.5" stroke-linecap="round"/><path d="M14 8 V20 M8 14 H20" stroke="#4d4d4d" stroke-width="3.2"/></svg>
<svg style="left:1596px;top:45px" width="34" height="34" viewBox="0 0 34 34"><circle cx="14" cy="14" r="11.5" fill="none" stroke="#4d4d4d" stroke-width="3"/><path d="M22.5 22.5 L31 31" stroke="#4d4d4d" stroke-width="3.5" stroke-linecap="round"/><path d="M8 14 H20" stroke="#4d4d4d" stroke-width="3.2"/></svg>
<svg style="left:1645px;top:45px" width="34" height="34" viewBox="0 0 34 34"><circle cx="14" cy="14" r="11.5" fill="none" stroke="#4d4d4d" stroke-width="3"/><path d="M22.5 22.5 L31 31" stroke="#4d4d4d" stroke-width="3.5" stroke-linecap="round"/><path d="M9 7 H16 L20 11 V21 H9 Z" fill="#8a8a8a"/></svg>
<svg style="left:1694px;top:45px" width="34" height="34" viewBox="0 0 34 34"><circle cx="14" cy="14" r="11.5" fill="none" stroke="#4d4d4d" stroke-width="3"/><path d="M22.5 22.5 L31 31" stroke="#4d4d4d" stroke-width="3.5" stroke-linecap="round"/><path d="M6 20 L11 13 L15 17 L18 14 L22 20 Z" fill="#9a9a9a"/><circle cx="18" cy="9" r="2" fill="#9a9a9a"/></svg>
<svg style="left:1743px;top:45px" width="34" height="34" viewBox="0 0 34 34"><circle cx="14" cy="14" r="11.5" fill="none" stroke="#4d4d4d" stroke-width="3"/><path d="M22.5 22.5 L31 31" stroke="#4d4d4d" stroke-width="3.5" stroke-linecap="round"/><path d="M10 7 L10 21 L13 18 L16 23 L18 22 L15 17 L19 17 Z" fill="#8a8a8a"/></svg>
<div class="abs" style="left:1788.5px;top:40px;width:1px;height:42px;background:#b4b4b4;"></div>
<svg style="left:1801px;top:45px" width="36" height="34" viewBox="0 0 36 34"><path d="M1 17 L15 2 V11 H34 V23 H15 V32 Z" fill="#1f7ac8"/></svg>
<svg style="left:1850px;top:45px" width="36" height="34" viewBox="0 0 36 34"><path d="M17 1 L33 16 H23 V33 H11 V16 H1 Z" fill="#1f7ac8"/></svg>
<svg style="left:1899px;top:45px" width="36" height="34" viewBox="0 0 36 34"><path d="M35 17 L21 2 V11 H2 V23 H21 V32 Z" fill="#1f7ac8"/></svg>
<div class="abs" style="left:943.4px;top:95px;width:45.4px;height:45.5px;background:#b7d7f5;border:1.3px solid #3a6d9c"></div>
<div class="abs" style="left:943.4px;top:144.5px;width:45.4px;height:45.2px;background:#b7d7f5;border:1.3px solid #3a6d9c"></div>
<svg style="left:0;top:0" width="1926" height="200"><circle cx="952.8" cy="104.8" r="2.5" fill="#454545"/><circle cx="952.8" cy="114" r="2.5" fill="#454545"/><circle cx="952.8" cy="122.8" r="2.5" fill="#454545"/><circle cx="952.8" cy="131.7" r="2.5" fill="#454545"/><circle cx="962" cy="104.8" r="2.5" fill="#454545"/><circle cx="962" cy="114" r="2.5" fill="#454545"/><circle cx="962" cy="122.8" r="2.5" fill="#454545"/><circle cx="962" cy="131.7" r="2.5" fill="#454545"/><circle cx="971.1" cy="104.8" r="2.5" fill="#454545"/><circle cx="971.1" cy="114" r="2.5" fill="#454545"/><circle cx="971.1" cy="122.8" r="2.5" fill="#454545"/><circle cx="971.1" cy="131.7" r="2.5" fill="#454545"/><circle cx="980.3" cy="104.8" r="2.5" fill="#454545"/><circle cx="980.3" cy="114" r="2.5" fill="#454545"/><circle cx="980.3" cy="122.8" r="2.5" fill="#454545"/><circle cx="980.3" cy="131.7" r="2.5" fill="#454545"/><circle cx="952.8" cy="154" r="2.5" fill="#454545"/><circle cx="962" cy="154" r="2.5" fill="#454545"/><circle cx="971.1" cy="154" r="2.5" fill="#454545"/><circle cx="952.8" cy="162.9" r="2.5" fill="#454545"/><circle cx="962" cy="162.9" r="2.5" fill="#454545"/><circle cx="952.8" cy="172" r="2.5" fill="#454545"/><circle cx="958.0" cy="182.5" r="1.3" fill="#454545"/><circle cx="962.7" cy="177.8" r="1.3" fill="#454545"/><circle cx="962.7" cy="182.5" r="1.3" fill="#454545"/><circle cx="967.4" cy="173.1" r="1.3" fill="#454545"/><circle cx="967.4" cy="177.8" r="1.3" fill="#454545"/><circle cx="967.4" cy="182.5" r="1.3" fill="#454545"/><circle cx="972.1" cy="168.4" r="1.3" fill="#454545"/><circle cx="972.1" cy="173.1" r="1.3" fill="#454545"/><circle cx="972.1" cy="177.8" r="1.3" fill="#454545"/><circle cx="972.1" cy="182.5" r="1.3" fill="#454545"/><circle cx="976.8" cy="163.7" r="1.3" fill="#454545"/><circle cx="976.8" cy="168.4" r="1.3" fill="#454545"/><circle cx="976.8" cy="173.1" r="1.3" fill="#454545"/><circle cx="976.8" cy="177.8" r="1.3" fill="#454545"/><circle cx="976.8" cy="182.5" r="1.3" fill="#454545"/><circle cx="981.5" cy="159.0" r="1.3" fill="#454545"/><circle cx="981.5" cy="163.7" r="1.3" fill="#454545"/><circle cx="981.5" cy="168.4" r="1.3" fill="#454545"/><circle cx="981.5" cy="173.1" r="1.3" fill="#454545"/><circle cx="981.5" cy="177.8" r="1.3" fill="#454545"/><circle cx="981.5" cy="182.5" r="1.3" fill="#454545"/><path d="M948.5 184.2 L983.3 150" stroke="#454545" stroke-width="1.6" stroke-linecap="round"/></svg>
<svg style="left:0;top:0" width="1000" height="820"><text x="966.7" y="218" font-family="Liberation Sans" font-weight="bold" font-size="16" text-anchor="middle" letter-spacing="0" fill="#454545">in</text><path d="M954 224 H979.5" stroke="#454545" stroke-width="2.6"/><path d="M950.5 224 L957.5 219.5 V228.5 Z M983 224 L976 219.5 V228.5 Z" fill="#454545"/></svg>
<svg style="left:0;top:0" width="1000" height="820"><text x="966.7" y="268.3" font-family="Liberation Sans" font-weight="bold" font-size="16" text-anchor="middle" letter-spacing="0" fill="#454545">mil</text><path d="M954 274.3 H979.5" stroke="#454545" stroke-width="2.6"/><path d="M950.5 274.3 L957.5 269.8 V278.8 Z M983 274.3 L976 269.8 V278.8 Z" fill="#454545"/></svg>
<div class="abs" style="left:943.4px;top:291px;width:45.4px;height:45.7px;background:#b7d7f5;border:1.3px solid #3a6d9c"></div>
<svg style="left:0;top:0" width="1000" height="820"><text x="966.7" y="315.5" font-family="Liberation Sans" font-weight="bold" font-size="17" text-anchor="middle" letter-spacing="0" fill="#454545">mm</text><path d="M954 321.5 H979.5" stroke="#454545" stroke-width="2.6"/><path d="M950.5 321.5 L957.5 317.0 V326.0 Z M983 321.5 L976 317.0 V326.0 Z" fill="#454545"/></svg>
<svg style="left:950px;top:346px" width="34" height="36" viewBox="0 0 34 36"><path d="M16 1 V31 M2 16 H30" stroke="#b8b8b8" stroke-width="1"/><path d="M16 9 V23 M9 16 H23" stroke="#1f7ac8" stroke-width="4" stroke-linecap="round"/><path d="M17 17 L19 31 L22 27 L26 33 L28 32 L24 26 L29 25 Z" fill="#3c3c3c"/></svg>
<div class="abs" style="left:945px;top:391px;width:43px;height:1px;background:#bcbcbc;"></div>
<svg style="left:0;top:0" width="1000" height="820"><path d="M954.5 404.5 L983.5 421.5 L954.5 438.5 Z" fill="none" stroke="#454545" stroke-width="2.6" stroke-linejoin="round"/><path d="M949 413 H954.5 M949 430 H954.5 M983.5 421.5 H987" stroke="#454545" stroke-width="2.4"/><path d="M966.8 404.5 V438.5" stroke="#c0203a" stroke-width="2.4"/><path d="M958 415 H963 M958 428 H963 M960.5 425.5 V430.5" stroke="#454545" stroke-width="1.6"/></svg>
<div class="abs" style="left:945px;top:449px;width:43px;height:1px;background:#bcbcbc;"></div>
<svg style="left:950px;top:461px" width="34" height="34" viewBox="0 0 34 34"><path d="M4 1 V33 M1 30 H33" stroke="#3c3c3c" stroke-width="3"/><path d="M4 28 L12 10 L18 22 L28 14" fill="none" stroke="#3c3c3c" stroke-width="1.6"/></svg>
<div class="abs" style="left:943.4px;top:505px;width:45.4px;height:45.5px;background:#b7d7f5;border:1.3px solid #3a6d9c"></div>
<svg style="left:950px;top:511px" width="34" height="34" viewBox="0 0 34 34"><path d="M4 1 V33 M1 30 H33" stroke="#3c3c3c" stroke-width="3"/><path d="M4 20 H14 V30" fill="none" stroke="#3c3c3c" stroke-width="1.6"/></svg>
<svg style="left:950px;top:561px" width="34" height="34" viewBox="0 0 34 34"><path d="M4 1 V33 M1 30 H33" stroke="#3c3c3c" stroke-width="3"/><path d="M4 30 L30 6" fill="none" stroke="#3c3c3c" stroke-width="2"/><path d="M13 22 V30" stroke="#3c3c3c" stroke-width="1.4"/></svg>
<div class="abs" style="left:945px;top:605px;width:43px;height:1px;background:#bcbcbc;"></div>
<div class="abs" style="left:943.4px;top:612px;width:45.4px;height:45.4px;background:#b7d7f5;border:1.3px solid #3a6d9c"></div>
<div class="abs" style="left:949px;top:617px;width:34px;height:16px;background:#4a4a4a"></div>
<div class="abs" style="left:949px;top:636px;width:34px;height:17px;background:#1f7ac8"></div>
<div id="t50" style="position:absolute;top:618.8px;font-size:14px;line-height:14px;color:#fff;font-family:'Liberation Sans',sans-serif;font-weight:bold;white-space:nowrap;left:966.0px;transform-origin:50% 50%;transform:translateX(-50%) ;">R??</div>
<div id="t51" style="position:absolute;top:637.8px;font-size:15px;line-height:15px;color:#fff;font-family:'Liberation Sans',sans-serif;font-weight:bold;white-space:nowrap;left:966.0px;transform-origin:50% 50%;transform:translateX(-50%) ;">R42</div>
<svg style="left:958px;top:632px" width="16" height="8" viewBox="0 0 16 8"><path d="M2 0 H14 L8 7 Z" fill="#c0203a"/></svg>
<div class="abs" style="left:945px;top:663px;width:43px;height:1px;background:#bcbcbc;"></div>
<svg style="left:949px;top:676px" width="34" height="35" viewBox="0 0 34 35"><rect x="1.5" y="1.5" width="31" height="32" fill="#fff" stroke="#3c3c3c" stroke-width="2.5"/><rect x="1.5" y="1.5" width="31" height="3.5" fill="#3c3c3c"/><path d="M8 9 V28 H12 M8 16 H12" stroke="#1f7ac8" stroke-width="2" fill="none"/><rect x="12" y="12" width="18" height="8" fill="none" stroke="#3c3c3c" stroke-width="1.8"/><rect x="12" y="23" width="18" height="8" fill="none" stroke="#3c3c3c" stroke-width="1.8"/></svg>
<svg style="left:949px;top:724px" width="36" height="36" viewBox="0 0 36 36"><path d="M4 33 L32 5" stroke="#3c3c3c" stroke-width="3"/><path d="M26 3 L33 10 L29 13 L23 7 Z" fill="#3c3c3c"/><path d="M8 6 A6 6 0 0 0 6 14 L24 32 A3 3 0 0 0 30 28 L12 10 A6 6 0 0 0 4 3 L9 8 L6 11 L1 6" fill="#1f7ac8"/></svg>
<svg style="left:0;top:0" width="1926" height="820" viewBox="0 0 1926 820">
<rect x="1059.9" y="95.9" width="1.4" height="1.4" fill="#dcdbd4"/>
<rect x="1059.9" y="186.9" width="1.4" height="1.4" fill="#dcdbd4"/>
<rect x="1059.9" y="277.9" width="1.4" height="1.4" fill="#dcdbd4"/>
<rect x="1059.9" y="368.9" width="1.4" height="1.4" fill="#dcdbd4"/>
<rect x="1059.9" y="459.9" width="1.4" height="1.4" fill="#dcdbd4"/>
<rect x="1059.9" y="550.9" width="1.4" height="1.4" fill="#dcdbd4"/>
<rect x="1059.9" y="641.9" width="1.4" height="1.4" fill="#dcdbd4"/>
<rect x="1059.9" y="732.9" width="1.4" height="1.4" fill="#dcdbd4"/>
<rect x="1150.9" y="95.9" width="1.4" height="1.4" fill="#dcdbd4"/>
<rect x="1150.9" y="186.9" width="1.4" height="1.4" fill="#dcdbd4"/>
<rect x="1150.9" y="277.9" width="1.4" height="1.4" fill="#dcdbd4"/>
<rect x="1150.9" y="368.9" width="1.4" height="1.4" fill="#dcdbd4"/>
<rect x="1150.9" y="459.9" width="1.4" height="1.4" fill="#dcdbd4"/>
<rect x="1150.9" y="550.9" width="1.4" height="1.4" fill="#dcdbd4"/>
<rect x="1150.9" y="641.9" width="1.4" height="1.4" fill="#dcdbd4"/>
<rect x="1150.9" y="732.9" width="1.4" height="1.4" fill="#dcdbd4"/>
<rect x="1241.9" y="95.9" width="1.4" height="1.4" fill="#dcdbd4"/>
<rect x="1241.9" y="186.9" width="1.4" height="1.4" fill="#dcdbd4"/>
<rect x="1241.9" y="277.9" width="1.4" height="1.4" fill="#dcdbd4"/>
<rect x="1241.9" y="368.9" width="1.4" height="1.4" fill="#dcdbd4"/>
<rect x="1241.9" y="459.9" width="1.4" height="1.4" fill="#dcdbd4"/>
<rect x="1241.9" y="550.9" width="1.4" height="1.4" fill="#dcdbd4"/>
<rect x="1241.9" y="641.9" width="1.4" height="1.4" fill="#dcdbd4"/>
<rect x="1241.9" y="732.9" width="1.4" height="1.4" fill="#dcdbd4"/>
<rect x="1332.9" y="95.9" width="1.4" height="1.4" fill="#dcdbd4"/>
<rect x="1332.9" y="186.9" width="1.4" height="1.4" fill="#dcdbd4"/>
<rect x="1332.9" y="277.9" width="1.4" height="1.4" fill="#dcdbd4"/>
<rect x="1332.9" y="368.9" width="1.4" height="1.4" fill="#dcdbd4"/>
<rect x="1332.9" y="459.9" width="1.4" height="1.4" fill="#dcdbd4"/>
<rect x="1332.9" y="550.9" width="1.4" height="1.4" fill="#dcdbd4"/>
<rect x="1332.9" y="641.9" width="1.4" height="1.4" fill="#dcdbd4"/>
<rect x="1332.9" y="732.9" width="1.4" height="1.4" fill="#dcdbd4"/>
<rect x="1423.9" y="95.9" width="1.4" height="1.4" fill="#dcdbd4"/>
<rect x="1423.9" y="186.9" width="1.4" height="1.4" fill="#dcdbd4"/>
<rect x="1423.9" y="277.9" width="1.4" height="1.4" fill="#dcdbd4"/>
<rect x="1423.9" y="368.9" width="1.4" height="1.4" fill="#dcdbd4"/>
<rect x="1423.9" y="459.9" width="1.4" height="1.4" fill="#dcdbd4"/>
<rect x="1423.9" y="550.9" width="1.4" height="1.4" fill="#dcdbd4"/>
<rect x="1423.9" y="641.9" width="1.4" height="1.4" fill="#dcdbd4"/>
<rect x="1423.9" y="732.9" width="1.4" height="1.4" fill="#dcdbd4"/>
<rect x="1514.9" y="95.9" width="1.4" height="1.4" fill="#dcdbd4"/>
<rect x="1514.9" y="186.9" width="1.4" height="1.4" fill="#dcdbd4"/>
<rect x="1514.9" y="277.9" width="1.4" height="1.4" fill="#dcdbd4"/>
<rect x="1514.9" y="368.9" width="1.4" height="1.4" fill="#dcdbd4"/>
<rect x="1514.9" y="459.9" width="1.4" height="1.4" fill="#dcdbd4"/>
<rect x="1514.9" y="550.9" width="1.4" height="1.4" fill="#dcdbd4"/>
<rect x="1514.9" y="641.9" width="1.4" height="1.4" fill="#dcdbd4"/>
<rect x="1514.9" y="732.9" width="1.4" height="1.4" fill="#dcdbd4"/>
<rect x="1605.9" y="95.9" width="1.4" height="1.4" fill="#dcdbd4"/>
<rect x="1605.9" y="186.9" width="1.4" height="1.4" fill="#dcdbd4"/>
<rect x="1605.9" y="277.9" width="1.4" height="1.4" fill="#dcdbd4"/>
<rect x="1605.9" y="368.9" width="1.4" height="1.4" fill="#dcdbd4"/>
<rect x="1605.9" y="459.9" width="1.4" height="1.4" fill="#dcdbd4"/>
<rect x="1605.9" y="550.9" width="1.4" height="1.4" fill="#dcdbd4"/>
<rect x="1605.9" y="641.9" width="1.4" height="1.4" fill="#dcdbd4"/>
<rect x="1605.9" y="732.9" width="1.4" height="1.4" fill="#dcdbd4"/>
<rect x="1696.9" y="95.9" width="1.4" height="1.4" fill="#dcdbd4"/>
<rect x="1696.9" y="186.9" width="1.4" height="1.4" fill="#dcdbd4"/>
<rect x="1696.9" y="277.9" width="1.4" height="1.4" fill="#dcdbd4"/>
<rect x="1696.9" y="368.9" width="1.4" height="1.4" fill="#dcdbd4"/>
<rect x="1696.9" y="459.9" width="1.4" height="1.4" fill="#dcdbd4"/>
<rect x="1696.9" y="550.9" width="1.4" height="1.4" fill="#dcdbd4"/>
<rect x="1696.9" y="641.9" width="1.4" height="1.4" fill="#dcdbd4"/>
<rect x="1696.9" y="732.9" width="1.4" height="1.4" fill="#dcdbd4"/>
<rect x="1787.9" y="95.9" width="1.4" height="1.4" fill="#dcdbd4"/>
<rect x="1787.9" y="186.9" width="1.4" height="1.4" fill="#dcdbd4"/>
<rect x="1787.9" y="277.9" width="1.4" height="1.4" fill="#dcdbd4"/>
<rect x="1787.9" y="368.9" width="1.4" height="1.4" fill="#dcdbd4"/>
<rect x="1787.9" y="459.9" width="1.4" height="1.4" fill="#dcdbd4"/>
<rect x="1787.9" y="550.9" width="1.4" height="1.4" fill="#dcdbd4"/>
<rect x="1787.9" y="641.9" width="1.4" height="1.4" fill="#dcdbd4"/>
<rect x="1787.9" y="732.9" width="1.4" height="1.4" fill="#dcdbd4"/>
<rect x="1878.9" y="95.9" width="1.4" height="1.4" fill="#dcdbd4"/>
<rect x="1878.9" y="186.9" width="1.4" height="1.4" fill="#dcdbd4"/>
<rect x="1878.9" y="277.9" width="1.4" height="1.4" fill="#dcdbd4"/>
<rect x="1878.9" y="368.9" width="1.4" height="1.4" fill="#dcdbd4"/>
<rect x="1878.9" y="459.9" width="1.4" height="1.4" fill="#dcdbd4"/>
<rect x="1878.9" y="550.9" width="1.4" height="1.4" fill="#dcdbd4"/>
<rect x="1878.9" y="641.9" width="1.4" height="1.4" fill="#dcdbd4"/>
<rect x="1878.9" y="732.9" width="1.4" height="1.4" fill="#dcdbd4"/>
<line x1="1304" y1="96.6" x2="1384" y2="96.6" stroke="#555" stroke-width="1"/>
<line x1="1343.3" y1="88" x2="1343.3" y2="136.3" stroke="#555" stroke-width="1"/>
<path d="M1371.3 179.2 H1389.8999999999999 V224.6 L1380.6 232.2 L1371.3 224.6 Z" fill="none" stroke="#840000" stroke-width="1.5"/>
<path d="M1725.9 188.3 H1744.5 V234.1 L1735.2 241.7 L1725.9 234.1 Z" fill="none" stroke="#840000" stroke-width="1.5"/>
<line x1="1380.6" y1="232.2" x2="1380.6" y2="278.5" stroke="#008400" stroke-width="1.5"/>
<line x1="1380.6" y1="278.5" x2="1735.2" y2="278.5" stroke="#008400" stroke-width="1.5"/>
<line x1="1735.2" y1="241.7" x2="1735.2" y2="305.8" stroke="#008400" stroke-width="1.5"/>
<circle cx="1380.6" cy="278.5" r="3.3" fill="#008400"/>
<circle cx="1634.5" cy="278.5" r="3.3" fill="#008400"/>
<circle cx="1735.2" cy="278.5" r="3.3" fill="#008400"/>
<circle cx="1634.5" cy="470.3" r="3.3" fill="#008400"/>
<line x1="1380.6" y1="278.5" x2="1380.6" y2="296.5" stroke="#840000" stroke-width="1.5"/>
<circle cx="1380.6" cy="314.5" r="18.1" fill="#ffffc2" stroke="#840000" stroke-width="1.9"/>
<line x1="1376.6" y1="302.2" x2="1384.6" y2="302.2" stroke="#840000" stroke-width="1.3"/>
<line x1="1380.6" y1="298.2" x2="1380.6" y2="306.2" stroke="#840000" stroke-width="1.3"/>
<line x1="1371" y1="313.2" x2="1390" y2="313.2" stroke="#840000" stroke-width="1.3"/>
<line x1="1371" y1="317.2" x2="1390" y2="317.2" stroke="#840000" stroke-width="1.3" stroke-dasharray="4 3.5"/>
<line x1="1380.6" y1="332.6" x2="1380.6" y2="360.5" stroke="#840000" stroke-width="1.5"/>
<path d="M1371.6 360.5 H1389.6 L1380.6 369.5 Z" fill="none" stroke="#840000" stroke-width="1.4"/>
<rect x="1727.7" y="305.75" width="15" height="37.5" fill="none" stroke="#840000" stroke-width="1.9"/>
<line x1="1735.2" y1="343.3" x2="1735.2" y2="370" stroke="#840000" stroke-width="1.5"/>
<path d="M1725.9 370 H1744.5 L1735.2 388 Z" fill="none" stroke="#840000" stroke-width="2"/>
<line x1="1725" y1="388.2" x2="1745.4" y2="388.2" stroke="#840000" stroke-width="2.2"/>
<line x1="1735.2" y1="388.2" x2="1735.2" y2="405.7" stroke="#840000" stroke-width="1.5"/>
<path d="M1740.4 392.2 L1751.5 401.7 M1740.4 401 L1751.5 411.2" stroke="#840000" stroke-width="1.2" fill="none"/>
<path d="M1746.5 401.5 L1751.5 401.7 L1751 397 M1746.5 411 L1751.5 411.2 L1751 406.5" stroke="#840000" stroke-width="1.2" fill="none"/>
<line x1="1735.2" y1="405.7" x2="1735.2" y2="431.6" stroke="#008400" stroke-width="1.5"/>
<line x1="1735.5" y1="431.6" x2="1735.5" y2="451" stroke="#840000" stroke-width="1.5"/>
<circle cx="1726.1" cy="470.1" r="20.4" fill="none" stroke="#840000" stroke-width="1.9"/>
<line x1="1722.7" y1="455.4" x2="1722.7" y2="484.2" stroke="#840000" stroke-width="3.2"/>
<line x1="1735.5" y1="451" x2="1722.7" y2="463.5" stroke="#840000" stroke-width="1.3"/>
<line x1="1722.7" y1="476.5" x2="1735.5" y2="489" stroke="#840000" stroke-width="1.3"/>
<path d="M1735 488.5 L1727.5 485.5 L1732 481 Z" fill="#840000" stroke="#840000" stroke-width="1"/>
<line x1="1735.5" y1="489" x2="1735.5" y2="514.7" stroke="#840000" stroke-width="1.5"/>
<line x1="1681" y1="470.2" x2="1722.7" y2="470.2" stroke="#840000" stroke-width="1.5"/>
<rect x="1727.7" y="514.65" width="15" height="37.5" fill="none" stroke="#840000" stroke-width="1.9"/>
<line x1="1735.2" y1="552.1" x2="1735.2" y2="570.3" stroke="#840000" stroke-width="1.5"/>
<path d="M1726.2 570.3 H1744.2 L1735.2 579.3 Z" fill="none" stroke="#840000" stroke-width="1.4"/>
<line x1="1634.5" y1="278.5" x2="1634.5" y2="396.8" stroke="#008400" stroke-width="1.5"/>
<rect x="1627.0" y="396.75" width="15" height="37.5" fill="none" stroke="#840000" stroke-width="1.9"/>
<line x1="1634.5" y1="434.3" x2="1634.5" y2="505.9" stroke="#008400" stroke-width="1.5"/>
<rect x="1627.0" y="505.75" width="15" height="37.5" fill="none" stroke="#840000" stroke-width="1.9"/>
<line x1="1634.5" y1="543.3" x2="1634.5" y2="570.3" stroke="#008400" stroke-width="1.5"/>
<path d="M1625.5 570.3 H1643.5 L1634.5 579.3 Z" fill="none" stroke="#840000" stroke-width="1.4"/>
<line x1="1600" y1="470.3" x2="1615" y2="470.3" stroke="#840000" stroke-width="1.5"/>
<line x1="1615" y1="470.3" x2="1681" y2="470.3" stroke="#008400" stroke-width="1.5"/>
<line x1="1562" y1="470.6" x2="1584" y2="470.6" stroke="#840000" stroke-width="1.5"/>
<line x1="1584" y1="455" x2="1584" y2="486" stroke="#840000" stroke-width="3.2" stroke-linecap="round"/>
<path d="M1599.5 455 Q1586 470.5 1599.5 486" fill="none" stroke="#840000" stroke-width="3" stroke-linecap="round"/>
<line x1="1591" y1="470.6" x2="1600" y2="470.6" stroke="#840000" stroke-width="1.5"/>
<line x1="1570" y1="479.3" x2="1576" y2="479.3" stroke="#840000" stroke-width="1.2"/>
<line x1="1573" y1="476.3" x2="1573" y2="482.3" stroke="#840000" stroke-width="1.2"/>
<line x1="1534" y1="470.7" x2="1562" y2="470.7" stroke="#008400" stroke-width="1.5"/>
<line x1="1480.5" y1="470.7" x2="1488.5" y2="470.7" stroke="#008400" stroke-width="1.5"/>
<rect x="1488.5" y="463" width="37.5" height="14.3" fill="none" stroke="#840000" stroke-width="1.9"/>
<line x1="1526" y1="470.7" x2="1534" y2="470.7" stroke="#008400" stroke-width="1.5"/>
<line x1="1380" y1="470.7" x2="1480.5" y2="470.7" stroke="#008400" stroke-width="1.5"/>
<line x1="1380" y1="470.7" x2="1380" y2="487.7" stroke="#840000" stroke-width="1.5"/>
<circle cx="1380" cy="505.6" r="18.1" fill="#ffffc2" stroke="#840000" stroke-width="1.9"/>
<line x1="1376" y1="493" x2="1384" y2="493" stroke="#840000" stroke-width="1.3"/>
<line x1="1380" y1="489" x2="1380" y2="497" stroke="#840000" stroke-width="1.3"/>
<path d="M1371.5 506 Q1375.5 498 1380 505.6 T1388.5 505" fill="none" stroke="#840000" stroke-width="1.5"/>
<line x1="1380" y1="523.7" x2="1380" y2="551.7" stroke="#840000" stroke-width="1.5"/>
<path d="M1371 551.7 H1389 L1380 560.7 Z" fill="none" stroke="#840000" stroke-width="1.4"/>
</svg>
<div id="t52" style="position:absolute;top:200.3px;font-size:13px;line-height:13px;color:#000084;font-family:'Liberation Mono',monospace;font-weight:normal;white-space:nowrap;left:1479.2px;transform-origin:0 50%;transform:scaleX(1.0372);-webkit-text-stroke:0.12px #f5f4ef;">.tran 100u 500m 400m</div>
<div style="position:absolute;left:1359px;top:197.3px;width:44px;height:14px;line-height:14px;text-align:center;font-family:'Liberation Mono',monospace;font-size:14px;color:#840000;transform:rotate(-90deg) scaleX(1.12);-webkit-text-stroke:0.12px #f5f4ef">+12V</div>
<div style="position:absolute;left:1713.6px;top:206.4px;width:44px;height:14px;line-height:14px;text-align:center;font-family:'Liberation Mono',monospace;font-size:14px;color:#840000;transform:rotate(-90deg) scaleX(1.12);-webkit-text-stroke:0.12px #f5f4ef">+12V</div>
<div id="t53" style="position:absolute;top:299.0px;font-size:13px;line-height:13px;color:#0a6064;font-family:'Liberation Mono',monospace;font-weight:normal;white-space:nowrap;left:1408.8px;transform-origin:0 50%;transform:scaleX(0.9688);-webkit-text-stroke:0.12px #f5f4ef;">V2</div>
<div id="t54" style="position:absolute;top:317.0px;font-size:13px;line-height:13px;color:#0a6064;font-family:'Liberation Mono',monospace;font-weight:normal;white-space:nowrap;left:1408.8px;transform-origin:0 50%;transform:scaleX(0.9688);-webkit-text-stroke:0.12px #f5f4ef;">12</div>
<div id="t55" style="position:absolute;top:381.4px;font-size:13px;line-height:13px;color:#0a6064;font-family:'Liberation Mono',monospace;font-weight:normal;white-space:nowrap;left:1367.6px;transform-origin:0 50%;transform:scaleX(1.1565);-webkit-text-stroke:0.12px #f5f4ef;">GND</div>
<div id="t56" style="position:absolute;top:382.1px;font-size:13px;line-height:13px;color:#d8409c;font-family:'Liberation Mono',monospace;font-weight:normal;white-space:nowrap;left:1597.2px;transform-origin:0 50%;transform:scaleX(0.9348);-webkit-text-stroke:0.12px #f5f4ef;">11V</div>
<div id="t57" style="position:absolute;top:263.1px;font-size:13px;line-height:13px;color:#d8409c;font-family:'Liberation Sans',sans-serif;font-weight:normal;white-space:nowrap;left:1754.5px;transform-origin:0 50%;transform:scaleX(1.0274);">↓ Ic = 7mA</div>
<div id="t58" style="position:absolute;top:308.5px;font-size:13px;line-height:13px;color:#0a6064;font-family:'Liberation Mono',monospace;font-weight:normal;white-space:nowrap;left:1755.4px;transform-origin:0 50%;transform:scaleX(0.9937);-webkit-text-stroke:0.12px #f5f4ef;">R3</div>
<div id="t59" style="position:absolute;top:326.6px;font-size:13px;line-height:13px;color:#0a6064;font-family:'Liberation Mono',monospace;font-weight:normal;white-space:nowrap;left:1755.4px;transform-origin:0 50%;transform:scaleX(1.0348);-webkit-text-stroke:0.12px #f5f4ef;">400</div>
<div id="t60" style="position:absolute;top:317.0px;font-size:13px;line-height:13px;color:#d8409c;font-family:'Liberation Mono',monospace;font-weight:normal;white-space:nowrap;left:1796.0px;transform-origin:0 50%;transform:scaleX(0.8710);-webkit-text-stroke:0.12px #f5f4ef;">2.8V</div>
<div id="t61" style="position:absolute;top:374.7px;font-size:13px;line-height:13px;color:#0a6064;font-family:'Liberation Mono',monospace;font-weight:normal;white-space:nowrap;left:1764.3px;transform-origin:0 50%;transform:scaleX(0.9875);-webkit-text-stroke:0.12px #f5f4ef;">D1</div>
<div id="t62" style="position:absolute;top:392.2px;font-size:13px;line-height:13px;color:#0a6064;font-family:'Liberation Mono',monospace;font-weight:normal;white-space:nowrap;left:1764.3px;transform-origin:0 50%;transform:scaleX(0.9913);-webkit-text-stroke:0.12px #f5f4ef;">LED</div>
<div id="t63" style="position:absolute;top:384.3px;font-size:13px;line-height:13px;color:#d8409c;font-family:'Liberation Sans',sans-serif;font-weight:normal;white-space:nowrap;left:1800.8px;transform-origin:0 50%;transform:scaleX(0.9915);">Vf=3.8V</div>
<div id="t64" style="position:absolute;top:400.7px;font-size:13px;line-height:13px;color:#0a6064;font-family:'Liberation Mono',monospace;font-weight:normal;white-space:nowrap;left:1655.5px;transform-origin:0 50%;transform:scaleX(0.9938);-webkit-text-stroke:0.12px #f5f4ef;">R4</div>
<div id="t65" style="position:absolute;top:418.2px;font-size:13px;line-height:13px;color:#0a6064;font-family:'Liberation Mono',monospace;font-weight:normal;white-space:nowrap;left:1655.5px;transform-origin:0 50%;transform:scaleX(1.0129);-webkit-text-stroke:0.12px #f5f4ef;">100k</div>
<div id="t66" style="position:absolute;top:509.0px;font-size:13px;line-height:13px;color:#0a6064;font-family:'Liberation Mono',monospace;font-weight:normal;white-space:nowrap;left:1655.5px;transform-origin:0 50%;transform:scaleX(0.9938);-webkit-text-stroke:0.12px #f5f4ef;">R2</div>
<div id="t67" style="position:absolute;top:526.6px;font-size:13px;line-height:13px;color:#0a6064;font-family:'Liberation Mono',monospace;font-weight:normal;white-space:nowrap;left:1652.6px;transform-origin:0 50%;transform:scaleX(0.8710);-webkit-text-stroke:0.12px #f5f4ef;">5.6k</div>
<div id="t68" style="position:absolute;top:517.2px;font-size:13px;line-height:13px;color:#d8409c;font-family:'Liberation Mono',monospace;font-weight:normal;white-space:nowrap;left:1607.8px;transform-origin:0 50%;transform:scaleX(0.9188);-webkit-text-stroke:0.12px #f5f4ef;">1V</div>
<div id="t69" style="position:absolute;top:517.7px;font-size:13px;line-height:13px;color:#0a6064;font-family:'Liberation Mono',monospace;font-weight:normal;white-space:nowrap;left:1755.1px;transform-origin:0 50%;transform:scaleX(1.0438);-webkit-text-stroke:0.12px #f5f4ef;">R5</div>
<div id="t70" style="position:absolute;top:535.7px;font-size:13px;line-height:13px;color:#0a6064;font-family:'Liberation Mono',monospace;font-weight:normal;white-space:nowrap;left:1755.1px;transform-origin:0 50%;transform:scaleX(0.9875);-webkit-text-stroke:0.12px #f5f4ef;">56</div>
<div id="t71" style="position:absolute;top:454.2px;font-size:13px;line-height:13px;color:#0a6064;font-family:'Liberation Mono',monospace;font-weight:normal;white-space:nowrap;left:1755.0px;transform-origin:0 50%;transform:scaleX(1.0312);-webkit-text-stroke:0.12px #f5f4ef;">Q1</div>
<div id="t72" style="position:absolute;top:472.9px;font-size:13px;line-height:13px;color:#0a6064;font-family:'Liberation Mono',monospace;font-weight:normal;white-space:nowrap;left:1755.0px;transform-origin:0 50%;transform:scaleX(1.0855);-webkit-text-stroke:0.12px #f5f4ef;">2SC1815</div>
<div id="t73" style="position:absolute;top:462.9px;font-size:13px;line-height:13px;color:#d8409c;font-family:'Liberation Mono',monospace;font-weight:normal;white-space:nowrap;left:1830.7px;transform-origin:0 50%;transform:scaleX(1.0062);-webkit-text-stroke:0.12px #f5f4ef;">5V</div>
<div id="t74" style="position:absolute;top:527.9px;font-size:13px;line-height:13px;color:#d8409c;font-family:'Liberation Mono',monospace;font-weight:normal;white-space:nowrap;left:1783.8px;transform-origin:0 50%;transform:scaleX(0.8645);-webkit-text-stroke:0.12px #f5f4ef;">0.4V</div>
<div id="t75" style="position:absolute;top:590.7px;font-size:13px;line-height:13px;color:#0a6064;font-family:'Liberation Mono',monospace;font-weight:normal;white-space:nowrap;left:1621.5px;transform-origin:0 50%;transform:scaleX(1.1304);-webkit-text-stroke:0.12px #f5f4ef;">GND</div>
<div id="t76" style="position:absolute;top:590.7px;font-size:13px;line-height:13px;color:#0a6064;font-family:'Liberation Mono',monospace;font-weight:normal;white-space:nowrap;left:1722.0px;transform-origin:0 50%;transform:scaleX(1.1304);-webkit-text-stroke:0.12px #f5f4ef;">GND</div>
<div id="t77" style="position:absolute;top:418.1px;font-size:13px;line-height:13px;color:#0a6064;font-family:'Liberation Mono',monospace;font-weight:normal;white-space:nowrap;left:1499.3px;transform-origin:0 50%;transform:scaleX(1.0063);-webkit-text-stroke:0.12px #f5f4ef;">R1</div>
<div id="t78" style="position:absolute;top:436.4px;font-size:13px;line-height:13px;color:#0a6064;font-family:'Liberation Mono',monospace;font-weight:normal;white-space:nowrap;left:1500.0px;transform-origin:0 50%;transform:scaleX(0.9125);-webkit-text-stroke:0.12px #f5f4ef;">1k</div>
<div id="t79" style="position:absolute;top:409.6px;font-size:13px;line-height:13px;color:#0a6064;font-family:'Liberation Mono',monospace;font-weight:normal;white-space:nowrap;left:1576.8px;transform-origin:0 50%;transform:scaleX(0.9938);-webkit-text-stroke:0.12px #f5f4ef;">C1</div>
<div id="t80" style="position:absolute;top:427.1px;font-size:13px;line-height:13px;color:#0a6064;font-family:'Liberation Mono',monospace;font-weight:normal;white-space:nowrap;left:1568.8px;transform-origin:0 50%;transform:scaleX(1.0226);-webkit-text-stroke:0.12px #f5f4ef;">100u</div>
<div id="t81" style="position:absolute;top:480.7px;font-size:13px;line-height:13px;color:#0a6064;font-family:'Liberation Mono',monospace;font-weight:normal;white-space:nowrap;left:1408.5px;transform-origin:0 50%;transform:scaleX(0.9625);-webkit-text-stroke:0.12px #f5f4ef;">V1</div>
<div id="t82" style="position:absolute;top:498.6px;font-size:13px;line-height:13px;color:#0a6064;font-family:'Liberation Mono',monospace;font-weight:normal;white-space:nowrap;left:1408.5px;transform-origin:0 50%;transform:scaleX(0.9452);-webkit-text-stroke:0.12px #f5f4ef;">VSIN</div>
<div id="t83" style="position:absolute;top:573.0px;font-size:13px;line-height:13px;color:#0a6064;font-family:'Liberation Mono',monospace;font-weight:normal;white-space:nowrap;left:1367.6px;transform-origin:0 50%;transform:scaleX(1.1217);-webkit-text-stroke:0.12px #f5f4ef;">GND</div>
<div id="t84" style="position:absolute;top:596.5px;font-size:13px;line-height:13px;color:#840084;font-family:'Liberation Mono',monospace;font-weight:normal;white-space:nowrap;left:1185.1px;transform-origin:0 50%;transform:scaleX(1.0501);-webkit-text-stroke:0.12px #f5f4ef;">dc=0 ampl=0.15 f=200 td=0 theta=0 phase=0 ac=1</div>
<div id="t85" style="position:absolute;top:456.4px;font-size:13px;line-height:13px;color:#a90000;font-family:'Liberation Mono',monospace;font-weight:normal;white-space:nowrap;left:1695.2px;transform-origin:0 50%;transform:scaleX(0.8875);-webkit-text-stroke:0.12px #f5f4ef;">3</div>
<div style="position:absolute;left:1722.5px;top:437.1px;width:12px;height:12px;line-height:12px;text-align:center;font-family:'Liberation Mono',monospace;font-size:12px;color:#a90000;transform:rotate(-90deg)">2</div>
<div style="position:absolute;left:1722.5px;top:490.2px;width:12px;height:12px;line-height:12px;text-align:center;font-family:'Liberation Mono',monospace;font-size:12px;color:#a90000;transform:rotate(-90deg)">1</div>
<div id="t86" style="position:absolute;top:317.8px;font-size:14px;line-height:14px;color:#840084;font-family:'Liberation Mono',monospace;font-weight:normal;white-space:nowrap;left:1735.2px;transform-origin:50% 50%;transform:translateX(-50%) ;-webkit-text-stroke:0.15px #f5f4ef;">R</div>
<div id="t87" style="position:absolute;top:408.8px;font-size:14px;line-height:14px;color:#840084;font-family:'Liberation Mono',monospace;font-weight:normal;white-space:nowrap;left:1634.5px;transform-origin:50% 50%;transform:translateX(-50%) ;-webkit-text-stroke:0.15px #f5f4ef;">R</div>
<div id="t88" style="position:absolute;top:517.8px;font-size:14px;line-height:14px;color:#840084;font-family:'Liberation Mono',monospace;font-weight:normal;white-space:nowrap;left:1634.5px;transform-origin:50% 50%;transform:translateX(-50%) ;-webkit-text-stroke:0.15px #f5f4ef;">R</div>
<div id="t89" style="position:absolute;top:526.7px;font-size:14px;line-height:14px;color:#840084;font-family:'Liberation Mono',monospace;font-weight:normal;white-space:nowrap;left:1735.2px;transform-origin:50% 50%;transform:translateX(-50%) ;-webkit-text-stroke:0.15px #f5f4ef;">R</div>
<div style="position:absolute;left:1501.3px;top:464.5px;width:12px;height:12px;line-height:12px;text-align:center;font-family:'Liberation Mono',monospace;font-size:14px;color:#840084;transform:rotate(-90deg);-webkit-text-stroke:0.15px #f5f4ef">R</div>
<script>(function(){var F={"t1": 160.5, "t2": 16.7, "t3": 44.1, "t4": 84.7, "t5": 73.5, "t6": 60.8, "t7": 123.4, "t8": 58.9, "t9": 71.2, "t10": 90.6, "t11": 111.7, "t12": 50, "t13": 48, "t22": 55.6, "t23": 55.6, "t24": 55.6, "t25": 55.6, "t26": 55.6, "t27": 55.6, "t28": 55.6, "t29": 55.6, "t39": 34, "t40": 64, "t41": 34, "t42": 74.7, "t43": 59.8, "t44": 61.3, "t45": 60, "t46": 54.7, "t47": 63.2, "t48": 55.7, "t49": 70.9, "t52": 161.8, "t53": 15.5, "t54": 15.5, "t55": 26.6, "t56": 21.5, "t57": 63.7, "t58": 15.9, "t59": 23.8, "t60": 27, "t61": 15.8, "t62": 22.8, "t63": 46.6, "t64": 15.9, "t65": 31.4, "t66": 15.9, "t67": 27.0, "t68": 14.7, "t69": 16.7, "t70": 15.8, "t71": 16.5, "t72": 59.7, "t73": 16.1, "t74": 26.8, "t75": 26.0, "t76": 26, "t77": 16.1, "t78": 14.6, "t79": 15.9, "t80": 31.7, "t81": 15.4, "t82": 29.3, "t83": 25.8, "t84": 377.0, "t85": 7.1};for(var k in F){var e=document.getElementById(k);if(!e)continue;var w=e.scrollWidth;if(w>0){e.style.transformOrigin='0 50%';e.style.transform='scaleX('+(F[k]/w).toFixed(4)+')';}}})();</script></body></html>
